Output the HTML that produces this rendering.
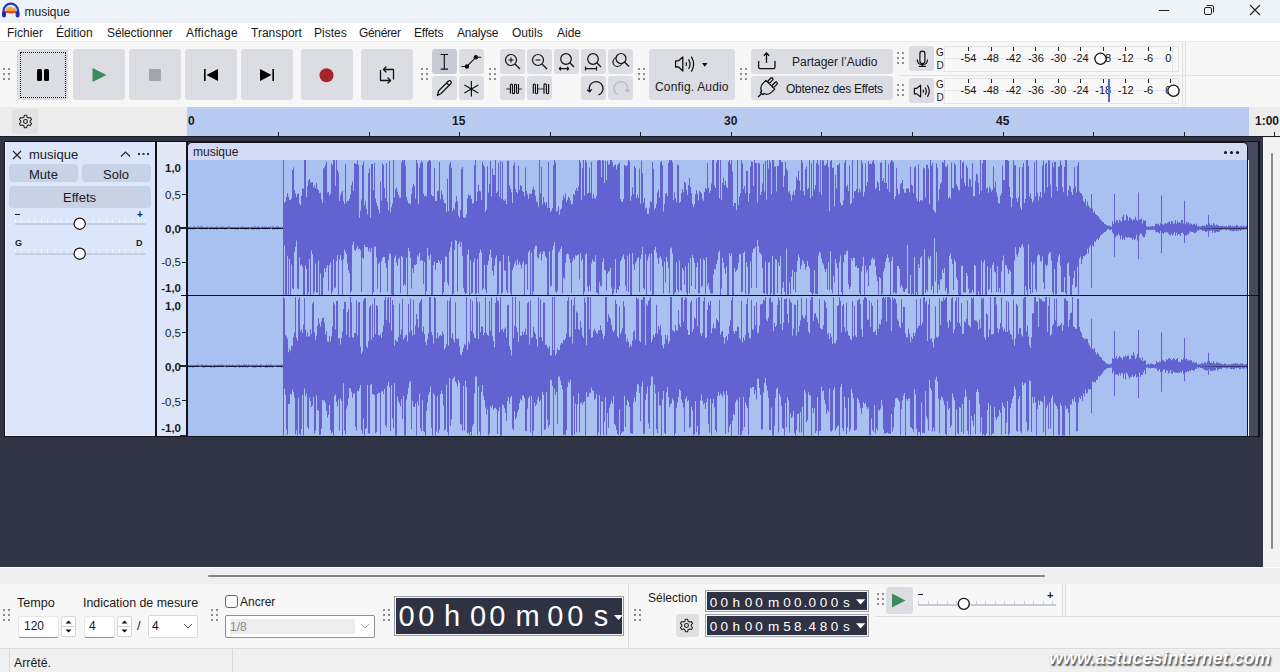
<!DOCTYPE html>
<html><head><meta charset="utf-8">
<style>
*{box-sizing:border-box;margin:0;padding:0}
html,body{width:1280px;height:672px;overflow:hidden;background:#f7f7f8;font-family:"Liberation Sans",sans-serif;font-size:12px;color:#1a1a1a}
.a{position:absolute}
.t{position:absolute;white-space:pre;line-height:1}
.btn{position:absolute;background:#dcdde2;border-radius:3px}
.grip{position:absolute;width:2px;height:2px;background:#8e8e8e;box-shadow:5px 0 #8e8e8e,0 5px #8e8e8e,5px 5px #8e8e8e,0 10px #8e8e8e,5px 10px #8e8e8e}
svg{position:absolute;overflow:visible}
</style></head><body>
<!-- title bar -->
<div class="a" style="left:0;top:0;width:1280px;height:23px;background:linear-gradient(#eef2f9 0 17px,#e9eef5 21px,#eceff4 23px)"></div>
<svg style="left:1px;top:2px" width="20" height="17" viewBox="0 0 20 17">
 <path d="M5 9.5L6 6.5L7 11L8 5L9 12L10 4.5L11 12L12 5.5L13 11L14 7L15 10" fill="none" stroke="#f2a83a" stroke-width="1.6"/>
 <path d="M4.5 10H15.5" stroke="#e8302a" stroke-width="1.6"/>
 <path d="M2.6 11.5V8.8A7.2 7.2 0 0 1 17 8.8V11.5" fill="none" stroke="#2238c8" stroke-width="2.2"/>
 <rect x="1" y="9" width="4" height="6.5" rx="2" fill="#1d2db8"/><rect x="14.6" y="9" width="4" height="6.5" rx="2" fill="#1d2db8"/>
</svg>
<div class="t" style="left:24.5px;top:6px;font-size:12px">musique</div>
<svg style="left:1158px;top:5px" width="12" height="12"><path d="M1 5.5H11" stroke="#222" stroke-width="1"/></svg>
<svg style="left:1203px;top:4px" width="12" height="12"><rect x="1.5" y="3.5" width="7" height="7" rx="1.5" fill="none" stroke="#222"/><path d="M3.5 1.5H9A1.5 1.5 0 0 1 10.5 3V8.5" fill="none" stroke="#222"/></svg>
<svg style="left:1249px;top:4px" width="12" height="12"><path d="M1 1L11 11M11 1L1 11" stroke="#222" stroke-width="1.1"/></svg>

<!-- menu bar -->
<div class="a" style="left:0;top:23px;width:1280px;height:18px;background:#ffffff"></div>
<div class="t" style="left:7px;top:27px">Fichier</div>
<div class="t" style="left:56px;top:27px">Édition</div>
<div class="t" style="left:107px;top:27px;letter-spacing:-0.1px">Sélectionner</div>
<div class="t" style="left:186px;top:27px;letter-spacing:0.22px">Affichage</div>
<div class="t" style="left:251px;top:27px">Transport</div>
<div class="t" style="left:314px;top:27px">Pistes</div>
<div class="t" style="left:359px;top:27px;letter-spacing:-0.35px">Générer</div>
<div class="t" style="left:414px;top:27px;letter-spacing:-0.2px">Effets</div>
<div class="t" style="left:457px;top:27px;letter-spacing:-0.2px">Analyse</div>
<div class="t" style="left:512px;top:27px">Outils</div>
<div class="t" style="left:557px;top:27px">Aide</div>

<!-- toolbar -->
<div class="a" style="left:0;top:41px;width:1280px;height:66px;background:#f7f7f8;border-top:1px solid #ebebeb"></div>
<div class="grip" style="left:3px;top:68px"></div>
<div class="btn" style="left:17px;top:49px;width:51px;height:51px"></div>
<div class="a" style="left:20px;top:52px;width:46px;height:46px;border:1px dotted #111"></div>
<svg style="left:37px;top:69px" width="12" height="12"><rect x="0" y="0" width="5" height="12" rx="1.5" fill="#000"/><rect x="7" y="0" width="5" height="12" rx="1.5" fill="#000"/></svg>
<div class="btn" style="left:73px;top:49px;width:52px;height:51px"></div>
<svg style="left:92px;top:68px" width="15" height="14"><path d="M0.5 0L14.5 7L0.5 14Z" fill="#3e8a60"/></svg>
<div class="btn" style="left:129px;top:49px;width:52px;height:51px"></div>
<div class="a" style="left:149px;top:69px;width:12px;height:12px;background:#a2a4ae;border-radius:1px"></div>
<div class="btn" style="left:185px;top:49px;width:52px;height:51px"></div>
<svg style="left:203px;top:68px" width="16" height="14"><rect x="1" y="1" width="1.6" height="12" fill="#000"/><path d="M15 1V13L3.5 7Z" fill="#000"/></svg>
<div class="btn" style="left:241px;top:49px;width:52px;height:51px"></div>
<svg style="left:259px;top:68px" width="16" height="14"><rect x="13.4" y="1" width="1.6" height="12" fill="#000"/><path d="M1 1V13L12.5 7Z" fill="#000"/></svg>
<div class="btn" style="left:301px;top:49px;width:52px;height:51px"></div>
<svg style="left:319px;top:68px" width="15" height="15"><circle cx="7.5" cy="7.2" r="7" fill="#a3262a"/></svg>
<div class="btn" style="left:361px;top:49px;width:52px;height:51px"></div>
<svg style="left:370px;top:60px" width="30" height="30"><path d="M383.5 69.5H393.5V79.5M380.5 70V80.5H390.5" transform="translate(-370,-60)" fill="none" stroke="#111" stroke-width="1.3" stroke-linejoin="round"/><path d="M386 67L383.5 69.5L386 72M388 78L390.5 80.5L388 83" transform="translate(-370,-60)" fill="none" stroke="#111" stroke-width="1.3" stroke-linecap="round" stroke-linejoin="round"/></svg>

<div class="grip" style="left:421px;top:68px"></div>
<!-- tools -->
<div class="btn" style="left:432px;top:49px;width:25px;height:25px;background:#c8cad6"></div>
<svg style="left:0;top:0" width="1" height="1"><path d="M440.6 54.5H448M444.3 54.5V69.1M440.6 69.1H448" stroke="#111" stroke-width="1.15" fill="none"/></svg>
<div class="btn" style="left:459px;top:49px;width:25px;height:25px"></div>
<svg style="left:0;top:0" width="1" height="1"><path d="M461.5 66.5H466.9L475.9 57.2H481.2" stroke="#111" stroke-width="1.15" fill="none"/><circle cx="466.9" cy="66.5" r="2.2" fill="#111"/><circle cx="475.9" cy="57.2" r="2.2" fill="#111"/></svg>
<div class="btn" style="left:432px;top:76px;width:25px;height:24px"></div>
<svg style="left:432px;top:76px" width="25" height="24"><path d="M5.5 19.5L6.5 15L16.5 5A1.8 1.8 0 0 1 19 7.5L9 17.5Z M14.5 7L17 9.5" stroke="#111" stroke-width="1.2" fill="none" stroke-linejoin="round"/></svg>
<div class="btn" style="left:459px;top:76px;width:25px;height:24px"></div>
<svg style="left:0;top:0" width="1" height="1"><path d="M471.4 81V96.5M464.4 85.1L478.3 92.9M478.3 85.1L464.4 92.9" stroke="#111" stroke-width="1.2"/></svg>

<div class="grip" style="left:489px;top:68px"></div>
<div class="btn" style="left:500px;top:49px;width:25px;height:25px"></div>
<svg style="left:500px;top:49px" width="25" height="25"><circle cx="11" cy="11" r="5.5" fill="none" stroke="#111" stroke-width="1.2"/><path d="M15 15L20 20" stroke="#111" stroke-width="1.3"/><path d="M8.5 11H13.5M11 8.5V13.5" stroke="#111" stroke-width="1.1"/></svg>
<div class="btn" style="left:527px;top:49px;width:25px;height:25px"></div>
<svg style="left:527px;top:49px" width="25" height="25"><circle cx="11" cy="11" r="5.5" fill="none" stroke="#111" stroke-width="1.2"/><path d="M15 15L20 20" stroke="#111" stroke-width="1.3"/><path d="M8.5 11H13.5" stroke="#111" stroke-width="1.1"/></svg>
<div class="btn" style="left:554px;top:49px;width:25px;height:25px"></div>
<svg style="left:554px;top:49px" width="25" height="25"><circle cx="12" cy="10" r="5.3" fill="none" stroke="#111" stroke-width="1.2"/><path d="M15.8 13.8L20 18" stroke="#111" stroke-width="1.3"/><path d="M5 19.6H15M5 19.6L7 17.9M5 19.6L7 21.3M15 19.6L13 17.9M15 19.6L13 21.3" stroke="#111" stroke-width="1.2" fill="none"/></svg>
<div class="btn" style="left:581px;top:49px;width:25px;height:25px"></div>
<svg style="left:581px;top:49px" width="25" height="25"><circle cx="12" cy="10" r="5.3" fill="none" stroke="#111" stroke-width="1.2"/><path d="M15.8 13.8L20 18" stroke="#111" stroke-width="1.3"/><path d="M4.5 19.6H15.5M4.5 17.6V21.6M15.5 17.6V21.6" stroke="#111" stroke-width="1.2" fill="none"/></svg>
<div class="btn" style="left:608px;top:49px;width:25px;height:25px"></div>
<svg style="left:608px;top:49px" width="25" height="25"><circle cx="9.5" cy="13" r="4.5" fill="none" stroke="#111" stroke-width="1.2"/><circle cx="13" cy="9.5" r="5" fill="#dcdde2" stroke="#111" stroke-width="1.2"/><path d="M16.5 13L21 17.5" stroke="#111" stroke-width="1.3"/></svg>

<div class="btn" style="left:500px;top:76px;width:25px;height:24px"></div>
<svg style="left:0;top:0" width="1" height="1"><path d="M506.2 89H510.4M518.5 89H521.8" stroke="#666" stroke-width="1.3"/><path d="M510.4 93.7V85.1A1.02 1.02 0 0 1 512.45 85.1V92.7A1.02 1.02 0 0 0 514.5 92.7V85.1A1.02 1.02 0 0 1 516.5 85.1V92.7A1.02 1.02 0 0 0 518.5 92.7V84" fill="none" stroke="#111" stroke-width="1.15"/></svg>
<div class="btn" style="left:527px;top:76px;width:25px;height:24px"></div>
<svg style="left:0;top:0" width="1" height="1"><path d="M537.6 88.9H544" stroke="#666" stroke-width="1.3"/><path d="M533.3 93.7V85.1A1.05 1.05 0 0 1 535.4 85.1V92.7A1.1 1.1 0 0 0 537.6 92.7V84M544 93.7V85.1A1.2 1.2 0 0 1 546.4 85.1V92.7A1.1 1.1 0 0 0 548.6 92.7V84" fill="none" stroke="#111" stroke-width="1.15"/></svg>
<div class="btn" style="left:581px;top:76px;width:25px;height:24px"></div>
<svg style="left:0;top:0" width="1" height="1"><path d="M598.4 95A6.9 6.9 0 1 0 589.6 90.8" fill="none" stroke="#111" stroke-width="1.3"/><path d="M587.2 89.7L589.6 91.7L591.7 89.4" fill="none" stroke="#111" stroke-width="1.3" stroke-linejoin="round"/></svg>
<div class="btn" style="left:608px;top:76px;width:25px;height:24px"></div>
<svg style="left:0;top:0" width="1" height="1"><path d="M618.5 95A6.9 6.9 0 1 1 627.3 90.8" fill="none" stroke="#b9bac2" stroke-width="1.3"/><path d="M629.7 89.7L627.3 91.7L625.2 89.4" fill="none" stroke="#b9bac2" stroke-width="1.3" stroke-linejoin="round"/></svg>

<div class="grip" style="left:638px;top:68px"></div>
<div class="btn" style="left:649px;top:49px;width:86px;height:51px"></div>
<svg style="left:0;top:0" width="1" height="1"><path d="M675.6 60.8H678.5L682.8 57V71L678.5 67H675.6Z" fill="none" stroke="#111" stroke-width="1.3" stroke-linejoin="round"/><path d="M685.9 62.3Q687.4 64.2 685.9 66.1M688.5 59.3Q691.6 64.2 688.5 69M691.3 56.6Q696 64.2 691.3 71.6" fill="none" stroke="#111" stroke-width="1.3"/><path d="M702 63H707.5L704.75 66.8Z" fill="#111"/></svg>
<div class="t" style="left:655px;top:80.5px;letter-spacing:0.18px">Config. Audio</div>

<div class="grip" style="left:740px;top:68px"></div>
<div class="btn" style="left:751px;top:49px;width:142px;height:25px"></div>
<svg style="left:0;top:0" width="1" height="1"><path d="M766.5 53V63M763.8 55.8L766.5 53L769.2 55.8" fill="none" stroke="#111" stroke-width="1.3"/><path d="M758.6 61V67A1.6 1.6 0 0 0 760.2 68.6H773.4A1.6 1.6 0 0 0 775 67V61" fill="none" stroke="#111" stroke-width="1.3"/></svg>
<div class="t" style="left:792px;top:56px">Partager l’Audio</div>
<div class="btn" style="left:751px;top:76px;width:142px;height:24px"></div>
<svg style="left:0;top:0" width="1" height="1"><g transform="translate(766.8 88.3) rotate(45) scale(1.12)" fill="none" stroke="#111" stroke-width="1.15" stroke-linejoin="round"><path d="M-5.5 -4.5H5.5V-1Q5.5 4 1.5 5V6.5H-1.5V5Q-5.5 4 -5.5 -1Z"/><rect x="-3.9" y="-10" width="2.4" height="5.5" rx="1.2"/><rect x="1.5" y="-10" width="2.4" height="5.5" rx="1.2"/><path d="M0 6.5V11"/></g></svg>
<div class="t" style="left:786px;top:82.5px;letter-spacing:-0.28px">Obtenez des Effets</div>

<div class="grip" style="left:897px;top:52px"></div>
<div class="grip" style="left:897px;top:84px"></div>
<div class="a" style="left:900px;top:75px;width:380px;height:1px;background:#e2e2e2"></div>
<div class="btn" style="left:909px;top:46px;width:25px;height:25px"></div>
<svg style="left:0;top:0" width="1" height="1"><rect x="919.9" y="51.2" width="5" height="12.4" rx="2.5" fill="none" stroke="#111" stroke-width="1.2"/><path d="M917.3 59.5Q917.3 64.6 922.4 64.6T927.5 59.5M922.4 64.6V66.3M918.9 66.4H925.9" fill="none" stroke="#111" stroke-width="1.2"/></svg>
<div class="btn" style="left:909px;top:78px;width:25px;height:25px"></div>
<svg style="left:0;top:0" width="1" height="1"><path d="M914.4 88.3H916.8L920.6 85.2V97L916.8 93.9H914.4Z" fill="none" stroke="#111" stroke-width="1.2" stroke-linejoin="round"/><path d="M922.9 89.6Q924.1 91.1 922.9 92.6M925.1 87.5Q927.6 91.1 925.1 94.7M927.4 85.3Q931.1 91.1 927.4 96.9" fill="none" stroke="#111" stroke-width="1.2"/></svg>
<div class="t" style="left:936px;top:47.5px;font-size:10px">G</div>
<div class="t" style="left:936.5px;top:61px;font-size:10px">D</div>
<div class="a" style="left:944px;top:46px;width:229px;height:26px;border:1px solid #e3e3e3;background:#f8f8f8"></div>
<div class="a" style="left:1172px;top:46px;width:7px;height:26px;border:1px solid #e3e3e3;border-left:none"></div>
<div class="a" style="left:945px;top:58px;width:227px;height:1px;background:#e6e6e6"></div>
<div class="a" style="left:968.0px;top:47px;width:1px;height:3.5px;background:#222"></div>
<div class="t" style="left:948.5px;width:40px;text-align:center;top:53px;font-size:11px;color:#111">&#8209;54</div>
<div class="a" style="left:990.5px;top:47px;width:1px;height:3.5px;background:#222"></div>
<div class="t" style="left:971.0px;width:40px;text-align:center;top:53px;font-size:11px;color:#111">&#8209;48</div>
<div class="a" style="left:1012.9px;top:47px;width:1px;height:3.5px;background:#222"></div>
<div class="t" style="left:993.4px;width:40px;text-align:center;top:53px;font-size:11px;color:#111">&#8209;42</div>
<div class="a" style="left:1035.4px;top:47px;width:1px;height:3.5px;background:#222"></div>
<div class="t" style="left:1015.9px;width:40px;text-align:center;top:53px;font-size:11px;color:#111">&#8209;36</div>
<div class="a" style="left:1057.9px;top:47px;width:1px;height:3.5px;background:#222"></div>
<div class="t" style="left:1038.4px;width:40px;text-align:center;top:53px;font-size:11px;color:#111">&#8209;30</div>
<div class="a" style="left:1080.3px;top:47px;width:1px;height:3.5px;background:#222"></div>
<div class="t" style="left:1060.8px;width:40px;text-align:center;top:53px;font-size:11px;color:#111">&#8209;24</div>
<div class="a" style="left:1102.8px;top:47px;width:1px;height:3.5px;background:#222"></div>
<div class="t" style="left:1083.3px;width:40px;text-align:center;top:53px;font-size:11px;color:#111">&#8209;18</div>
<div class="a" style="left:1125.3px;top:47px;width:1px;height:3.5px;background:#222"></div>
<div class="t" style="left:1105.8px;width:40px;text-align:center;top:53px;font-size:11px;color:#111">&#8209;12</div>
<div class="a" style="left:1147.8px;top:47px;width:1px;height:3.5px;background:#222"></div>
<div class="t" style="left:1128.3px;width:40px;text-align:center;top:53px;font-size:11px;color:#111">&#8209;6</div>
<div class="a" style="left:1170.2px;top:47px;width:1px;height:3.5px;background:#222"></div>
<div class="t" style="left:1148.3px;width:40px;text-align:center;top:53px;font-size:11px;color:#111">0</div>
<div class="t" style="left:936px;top:79.5px;font-size:10px">G</div>
<div class="t" style="left:936.5px;top:93px;font-size:10px">D</div>
<div class="a" style="left:944px;top:78px;width:229px;height:26px;border:1px solid #e3e3e3;background:#f8f8f8"></div>
<div class="a" style="left:1172px;top:78px;width:7px;height:26px;border:1px solid #e3e3e3;border-left:none"></div>
<div class="a" style="left:945px;top:90px;width:227px;height:1px;background:#e6e6e6"></div>
<div class="a" style="left:968.0px;top:79px;width:1px;height:3.5px;background:#222"></div>
<div class="t" style="left:948.5px;width:40px;text-align:center;top:85px;font-size:11px;color:#111">&#8209;54</div>
<div class="a" style="left:990.5px;top:79px;width:1px;height:3.5px;background:#222"></div>
<div class="t" style="left:971.0px;width:40px;text-align:center;top:85px;font-size:11px;color:#111">&#8209;48</div>
<div class="a" style="left:1012.9px;top:79px;width:1px;height:3.5px;background:#222"></div>
<div class="t" style="left:993.4px;width:40px;text-align:center;top:85px;font-size:11px;color:#111">&#8209;42</div>
<div class="a" style="left:1035.4px;top:79px;width:1px;height:3.5px;background:#222"></div>
<div class="t" style="left:1015.9px;width:40px;text-align:center;top:85px;font-size:11px;color:#111">&#8209;36</div>
<div class="a" style="left:1057.9px;top:79px;width:1px;height:3.5px;background:#222"></div>
<div class="t" style="left:1038.4px;width:40px;text-align:center;top:85px;font-size:11px;color:#111">&#8209;30</div>
<div class="a" style="left:1080.3px;top:79px;width:1px;height:3.5px;background:#222"></div>
<div class="t" style="left:1060.8px;width:40px;text-align:center;top:85px;font-size:11px;color:#111">&#8209;24</div>
<div class="a" style="left:1102.8px;top:79px;width:1px;height:3.5px;background:#222"></div>
<div class="t" style="left:1083.3px;width:40px;text-align:center;top:85px;font-size:11px;color:#111">&#8209;18</div>
<div class="a" style="left:1125.3px;top:79px;width:1px;height:3.5px;background:#222"></div>
<div class="t" style="left:1105.8px;width:40px;text-align:center;top:85px;font-size:11px;color:#111">&#8209;12</div>
<div class="a" style="left:1147.8px;top:79px;width:1px;height:3.5px;background:#222"></div>
<div class="t" style="left:1128.3px;width:40px;text-align:center;top:85px;font-size:11px;color:#111">&#8209;6</div>
<div class="a" style="left:1170.2px;top:79px;width:1px;height:3.5px;background:#222"></div>
<div class="t" style="left:1148.3px;width:40px;text-align:center;top:85px;font-size:11px;color:#111">0</div>
<svg style="left:1094px;top:52px" width="14" height="14"><circle cx="6.5" cy="6.8" r="5.6" fill="#fff" stroke="#111" stroke-width="1.3"/></svg>
<div class="a" style="left:1108px;top:79px;width:2px;height:23px;background:#5a68cf"></div>
<svg style="left:1167px;top:84px" width="14" height="14"><circle cx="6.5" cy="6.8" r="5.6" fill="#fff" stroke="#111" stroke-width="1.3"/></svg>
<div class="a" style="left:1182px;top:42px;width:1px;height:65px;background:#e0e0e0"></div>
<div class="a" style="left:1185px;top:42px;width:1px;height:65px;background:#e0e0e0"></div>


<!-- timeline -->
<div class="a" style="left:0;top:107px;width:1280px;height:29px;background:#ececec"></div>
<div class="a" style="left:187px;top:107px;width:1062px;height:29px;background:#b9cbf1"></div>
<div class="btn" style="left:12px;top:109px;width:26px;height:25px;background:#e2e2e5"></div>
<svg style="left:17.5px;top:113.5px" width="15" height="15" viewBox="0 0 17 17"><path d="M7.2 1.5H9.8L10.3 3.6L12 4.6L14.1 4L15.4 6.2L13.8 7.7V9.3L15.4 10.8L14.1 13L12 12.4L10.3 13.4L9.8 15.5H7.2L6.7 13.4L5 12.4L2.9 13L1.6 10.8L3.2 9.3V7.7L1.6 6.2L2.9 4L5 4.6L6.7 3.6Z" fill="none" stroke="#222" stroke-width="1.2" stroke-linejoin="round"/><circle cx="8.5" cy="8.5" r="2.2" fill="none" stroke="#222" stroke-width="1.2"/></svg>
<div class="t" style="left:188px;top:115px;font-weight:700;color:#1a1a1a">0</div>
<div class="t" style="left:452px;top:115px;font-weight:700;color:#1a1a1a">15</div>
<div class="t" style="left:724px;top:115px;font-weight:700;color:#1a1a1a">30</div>
<div class="t" style="left:996px;top:115px;font-weight:700;color:#1a1a1a">45</div>
<div class="t" style="left:1255px;top:115px;font-weight:700;color:#1a1a1a">1:00</div>
<div class="a" style="left:277.9px;top:132px;width:1px;height:4px;background:#222"></div>
<div class="a" style="left:368.5px;top:132px;width:1px;height:4px;background:#222"></div>
<div class="a" style="left:459.0px;top:132px;width:1px;height:4px;background:#222"></div>
<div class="a" style="left:549.6px;top:132px;width:1px;height:4px;background:#222"></div>
<div class="a" style="left:640.2px;top:132px;width:1px;height:4px;background:#222"></div>
<div class="a" style="left:730.8px;top:132px;width:1px;height:4px;background:#222"></div>
<div class="a" style="left:821.4px;top:132px;width:1px;height:4px;background:#222"></div>
<div class="a" style="left:911.9px;top:132px;width:1px;height:4px;background:#222"></div>
<div class="a" style="left:1002.5px;top:132px;width:1px;height:4px;background:#222"></div>
<div class="a" style="left:1093.1px;top:132px;width:1px;height:4px;background:#222"></div>
<div class="a" style="left:1183.7px;top:132px;width:1px;height:4px;background:#222"></div>
<div class="a" style="left:1274.3px;top:132px;width:1px;height:4px;background:#222"></div>


<!-- track area -->
<div class="a" style="left:0;top:136px;width:1263px;height:431px;background:#313444"></div>
<div class="a" style="left:0;top:136px;width:1280px;height:1px;background:#1a1a22"></div>
<div class="a" style="left:4px;top:141px;width:1256px;height:296px;background:#111318"></div>
<div class="a" style="left:5px;top:142px;width:150px;height:294px;background:#dce6fa;box-shadow:inset 1px -1px 0 #f2f6ff"></div>
<div class="a" style="left:157px;top:142px;width:29px;height:294px;background:#dde6f8"></div><div class="a" style="left:157px;top:142px;width:29px;height:18px;background:#e3e8f6"></div>
<div class="a" style="left:188px;top:142px;width:1070px;height:294px;background:#454a5e"></div>
<div class="a" style="left:187px;top:142.4px;width:1061px;height:17.6px;background:#d3daf3;border:1px solid #15161c;border-bottom:none;border-radius:5px 5px 0 0"></div>
<div class="a" style="left:188px;top:160px;width:1059px;height:276px;background:#a9c1f1"></div>
<div class="a" style="left:1247px;top:160px;width:1px;height:276px;background:#15161c"></div><div class="a" style="left:1248px;top:160px;width:1px;height:276px;background:#f4f6ff"></div>
<div class="t" style="left:193px;top:145.7px;font-size:12px;color:#1a1a1a">musique</div>
<div class="a" style="left:1224px;top:151px;width:3px;height:3px;border-radius:50%;background:#111;box-shadow:6px 0 0 #111,12px 0 0 #111"></div>

<svg style="left:0;top:0" width="1280" height="672"><path d="M188 227V227h1V226.4h1V227h1V227h1V227h1V226.4h1V226.4h1V227h1V227h1V226.4h1V226.4h1V227h1V226.4h1V226.4h1V226.4h1V227h1V227h1V227h1V227h1V226.4h1V227h1V227h1V227h1V226.4h1V227h1V227h1V227h1V227h1V226.4h1V226.4h1V227h1V227h1V227h1V226.4h1V227h1V226.4h1V227h1V227h1V227h1V227h1V226.4h1V226.4h1V227h1V227h1V227h1V227h1V227h1V227h1V227h1V227h1V227h1V227h1V227h1V226.4h1V226.4h1V227h1V227h1V227h1V227h1V227h1V227h1V227h1V227h1V227h1V226.4h1V227h1V226.4h1V226.4h1V227h1V226.4h1V226.4h1V227h1V227h1V227h1V226.4h1V227h1V226.4h1V227h1V226.4h1V227h1V227h1V227h1V226.4h1V227h1V226.4h1V226.4h1V227h1V227h1V226.4h1V226.4h1V226.4h1V227h1V227h1V227h1V227h1V160h1V202.9h1V201.6h1V196.8h1V193.1h1V196.7h1V199.8h1V199.9h1V198.4h1V170.1h1V167.4h1V190.3h1V193.4h1V197h1V193.9h1V193.5h1V203.5h1V205.1h1V195.8h1V188.3h1V188.7h1V160h1V160h1V197.2h1V186.2h1V180.2h1V179.1h1V182.4h1V182.2h1V182h1V187.4h1V185.3h1V188.3h1V182.9h1V189.1h1V190.1h1V193.1h1V192.7h1V199.3h1V203.1h1V168.4h1V167.5h1V164.8h1V161.7h1V192.6h1V191.7h1V195.7h1V193.9h1V163.6h1V165.2h1V160h1V160.2h1V186.1h1V160h1V170.1h1V172.6h1V201h1V195.5h1V192.6h1V190.9h1V200.8h1V204.1h1V164.2h1V202.8h1V200.8h1V201.1h1V198.8h1V194.5h1V185.1h1V181.5h1V190.8h1V163.3h1V163.7h1V163.9h1V160.4h1V164.8h1V217.8h1V210.5h1V199.6h1V164.9h1V161.8h1V205.2h1V200.7h1V208.8h1V214.2h1V173.1h1V168.6h1V217.8h1V164.1h1V164.1h1V190.3h1V163h1V198.6h1V202.7h1V206h1V209.4h1V213.2h1V181.5h1V200.6h1V163.3h1V165h1V187.7h1V198.2h1V162.9h1V201.7h1V210.2h1V160.8h1V212.2h1V207.3h1V203.4h1V160h1V197.5h1V189.3h1V187.6h1V191.8h1V195.1h1V197.6h1V197.7h1V162.5h1V160h1V160.4h1V160h1V165.5h1V197.1h1V200.4h1V203.5h1V203.3h1V204.5h1V194.1h1V187.6h1V184.1h1V185.9h1V198.6h1V160h1V162.9h1V204.2h1V167.8h1V162.9h1V160.8h1V162.6h1V193.6h1V196.6h1V195.4h1V196.6h1V162.3h1V161.1h1V160h1V160.8h1V194.5h1V196h1V196.5h1V168.2h1V200.8h1V201.3h1V191.3h1V190.6h1V162h1V199.2h1V190.4h1V194.8h1V199.7h1V203.1h1V203.6h1V212.1h1V178.8h1V210.9h1V164.2h1V161.9h1V168.1h1V211.3h1V208.2h1V209.7h1V202.4h1V196.2h1V201.3h1V215.6h1V217.6h1V209.9h1V168.7h1V166.9h1V217.3h1V217.8h1V217.8h1V214.6h1V198.2h1V194.5h1V195.6h1V195.5h1V199.1h1V203.7h1V203h1V165.3h1V160h1V200.9h1V191.7h1V184.7h1V190.9h1V191.4h1V200.3h1V161.9h1V165.1h1V167.1h1V212h1V209.7h1V166.2h1V192.6h1V184.3h1V160.7h1V196.2h1V168.5h1V175.1h1V175.3h1V160h1V193.1h1V191.5h1V162.8h1V196.7h1V161.1h1V198.9h1V162.1h1V200.2h1V200.8h1V199.3h1V204.1h1V161.1h1V160.6h1V185.4h1V188.4h1V192.3h1V203.1h1V165.6h1V162.6h1V189.1h1V192h1V193.5h1V165.7h1V189.9h1V185.2h1V186h1V191.1h1V192.1h1V196.6h1V167.5h1V191h1V194.6h1V199.1h1V193.4h1V193.9h1V193.8h1V189.6h1V186.9h1V190h1V195.7h1V201.4h1V202.2h1V206.8h1V160h1V193.4h1V167h1V204.3h1V197.1h1V202.1h1V204.4h1V201.9h1V207.9h1V161.8h1V208h1V212.1h1V210.5h1V208h1V164.9h1V160h1V162.4h1V211.5h1V210.7h1V206.5h1V214.7h1V209.7h1V208.5h1V200.3h1V195.6h1V197.9h1V193.1h1V202.3h1V199.8h1V196.5h1V198h1V200.4h1V204.8h1V203.7h1V194.1h1V194.9h1V190.5h1V188.1h1V191h1V186.4h1V160h1V162.5h1V200.1h1V168.2h1V160h1V195.4h1V160h1V162.3h1V193.8h1V192.7h1V167.6h1V193.1h1V161.9h1V198.4h1V194.1h1V198h1V198.9h1V195.7h1V160.7h1V160h1V160h1V160.5h1V177.2h1V160h1V160.6h1V183h1V160.7h1V180.2h1V160.8h1V164.9h1V163.8h1V160h1V160h1V162.1h1V167h1V164.9h1V164.5h1V169.6h1V165.2h1V163.7h1V162.4h1V198.9h1V201.3h1V202h1V199.2h1V165h1V165.6h1V166.5h1V164.9h1V160h1V161.5h1V200.7h1V196h1V187.3h1V194.1h1V166.1h1V168.1h1V198.2h1V194.8h1V197.8h1V168.5h1V203.7h1V160.4h1V173.3h1V202.8h1V198.1h1V208.5h1V207.8h1V214h1V213.7h1V207.6h1V200.9h1V202.5h1V162.1h1V168.8h1V209.5h1V207.9h1V203.7h1V192.4h1V189.7h1V197.8h1V162.6h1V161.3h1V165.3h1V211.5h1V203.7h1V193.5h1V192.9h1V196.3h1V163.1h1V160h1V160.5h1V160h1V162.6h1V200.1h1V192.3h1V198h1V202.3h1V164.4h1V165.4h1V203.1h1V201.8h1V193.3h1V188.9h1V192.2h1V181.6h1V182.8h1V189.9h1V194.9h1V185h1V177.9h1V186.8h1V192.9h1V203.8h1V207.2h1V204.3h1V194.3h1V190.2h1V194h1V200.2h1V190.7h1V192.1h1V193.5h1V198.4h1V200.8h1V191.9h1V188.1h1V189.2h1V163h1V187.8h1V192.8h1V190.7h1V183.5h1V160h1V160h1V185.6h1V187.9h1V162.5h1V160h1V160h1V198.3h1V160h1V199.7h1V183h1V177.7h1V185h1V180.8h1V187.1h1V188.2h1V161.7h1V160h1V164h1V160h1V171.4h1V206.1h1V203.1h1V203.1h1V210.2h1V160h1V205.1h1V196.6h1V193.1h1V160h1V163.4h1V189h1V186.1h1V193.1h1V170.7h1V170.9h1V201.4h1V193.5h1V166.6h1V161h1V161.9h1V186.1h1V160h1V162.9h1V163h1V202.5h1V162.6h1V163.7h1V195.1h1V192.1h1V183.4h1V163.7h1V191.6h1V160.9h1V199.7h1V160h1V168.5h1V160h1V162.5h1V194.3h1V160h1V160h1V166.4h1V166.6h1V191.5h1V165.7h1V166.1h1V160h1V160.3h1V161.9h1V162h1V186.9h1V175.7h1V162.1h1V168.5h1V170.7h1V192.6h1V191h1V194.5h1V200.5h1V195h1V191.4h1V194.9h1V189.5h1V176.8h1V179.7h1V170.7h1V181h1V190.2h1V160h1V162.5h1V191.1h1V195.3h1V169.2h1V166.3h1V189.6h1V188h1V160.2h1V198.3h1V163.3h1V196h1V160h1V189.7h1V185.1h1V163.1h1V160h1V164.4h1V192.1h1V160.3h1V194.7h1V160h1V160.6h1V165.5h1V165.5h1V163.8h1V160h1V167h1V211.3h1V161.3h1V160h1V168.1h1V167.4h1V206.5h1V174.9h1V188.5h1V165.1h1V165.2h1V163.2h1V202.7h1V205.2h1V205h1V200.4h1V162.7h1V160h1V186.7h1V184.8h1V191.1h1V165.6h1V204.2h1V203h1V160h1V198.4h1V191.1h1V191.3h1V188.9h1V160h1V192.5h1V188.4h1V191.4h1V160.3h1V163.2h1V196.5h1V192.3h1V163.3h1V185.4h1V182.1h1V160.9h1V164h1V163.6h1V164.3h1V161.4h1V160h1V163.7h1V189.3h1V187.5h1V181h1V183.1h1V191.1h1V162.9h1V161.9h1V180.9h1V178.3h1V183h1V160h1V183h1V189h1V164h1V192.1h1V162.3h1V160h1V161h1V162.4h1V199.3h1V196.2h1V167.8h1V188.7h1V194.4h1V193.8h1V184.2h1V183h1V179.9h1V189h1V192.5h1V193.1h1V188.6h1V188.3h1V188.8h1V192.2h1V166.7h1V184.7h1V185.7h1V192.9h1V167.5h1V166.3h1V198.4h1V201.1h1V164.3h1V202.1h1V200.1h1V200.3h1V200.4h1V167.4h1V168.4h1V197.6h1V165h1V164.6h1V168.5h1V203.9h1V160h1V165.9h1V162.9h1V209.8h1V211.3h1V213.1h1V163.6h1V167.5h1V200.6h1V189.2h1V183.8h1V182.2h1V162h1V162.7h1V160h1V166.3h1V167.3h1V164.7h1V198.5h1V196.8h1V198.7h1V162.5h1V187.8h1V188h1V162.9h1V165.1h1V184.6h1V186.6h1V189.7h1V190.6h1V160h1V178.4h1V162.7h1V161.8h1V182.7h1V186h1V165.4h1V167.8h1V186.8h1V178.5h1V179.5h1V186.4h1V163.3h1V196.4h1V196.1h1V180.7h1V173.4h1V174.8h1V183.2h1V194.3h1V160h1V191.1h1V163.2h1V160h1V160h1V160h1V188.5h1V187.5h1V192.8h1V186.7h1V188.4h1V191.7h1V189.9h1V166.4h1V187.5h1V181.4h1V192.4h1V196.6h1V203.1h1V203.8h1V195.7h1V193.3h1V165.6h1V180.1h1V180.3h1V160h1V160h1V160h1V161.1h1V186.7h1V196.9h1V207.2h1V198.2h1V160.2h1V165.2h1V165.3h1V198.2h1V202.1h1V197.3h1V167.2h1V207.6h1V210h1V167.1h1V163.1h1V203h1V198.9h1V160h1V160h1V166.2h1V196.8h1V193.4h1V199.1h1V202.4h1V200.5h1V162.2h1V196.6h1V160.1h1V192.4h1V200.4h1V196.2h1V192.1h1V197.7h1V165.4h1V160.7h1V192.7h1V163.9h1V162.8h1V187.3h1V160.2h1V160.6h1V184.6h1V197.4h1V162.6h1V167.2h1V161.7h1V162h1V186.7h1V190.9h1V166.6h1V166.6h1V160.6h1V164.7h1V186.9h1V192.3h1V166.9h1V160h1V160.3h1V195.8h1V190.2h1V185.4h1V186.7h1V192.1h1V195h1V188.5h1V167.2h1V186.3h1V192.5h1V165.5h1V162.3h1V191.5h1V193h1V193.4h1V195.7h1V201h1V202.5h1V199.1h1V205.7h1V201.6h1V205.5h1V207.5h1V208.3h1V194h1V208.6h1V212.7h1V211.3h1V214h1V215.1h1V215.7h1V216.4h1V218.4h1V219.5h1V220.6h1V222.1h1V221.9h1V224h1V224.2h1V224.9h1V225.9h1V225.5h1V225.7h1V226.2h1V226.8h1V221.3h1V223.9h1V194h1V222h1V220h1V220.2h1V222.8h1V219.8h1V220.6h1V221.7h1V216.8h1V214.8h1V220.4h1V220h1V214.3h1V216.2h1V220.6h1V217.6h1V217.7h1V218.9h1V220.8h1V219.2h1V219.8h1V216.8h1V219.6h1V221h1V192.6h1V219.4h1V219.6h1V218.4h1V223.4h1V220.3h1V220.7h1V220.4h1V226.6h1V226.7h1V226.4h1V226.8h1V226.3h1V226.6h1V226.1h1V226.2h1V226.2h1V223.4h1V224h1V224.3h1V223.5h1V225.4h1V223.2h1V195.4h1V223.9h1V224.7h1V223.4h1V222.9h1V224h1V222.7h1V222.3h1V221.4h1V223.7h1V220.9h1V221.3h1V223.8h1V223.5h1V220h1V223.7h1V220.7h1V223h1V221.9h1V223.3h1V220h1V220.1h1V223.5h1V200.8h1V224.3h1V221.6h1V222.9h1V221.9h1V224.4h1V222.9h1V224.1h1V225h1V223.7h1V224h1V225h1V223.4h1V226.6h1V225.7h1V226.6h1V226.6h1V226.1h1V225.5h1V225.9h1V225.6h1V225.9h1V223.7h1V225h1V215.1h1V223.6h1V224.9h1V224.7h1V225.4h1V223h1V224.6h1V225.7h1V224.4h1V225.1h1V225.4h1V225.9h1V226.1h1V226.1h1V225.8h1V226.6h1V226.2h1V226.2h1V225.8h1V226.9h1V225.5h1V225.7h1V225.3h1V226.6h1V225.8h1V226.5h1V226.3h1V225.9h1V225.1h1V225.5h1V226.5h1V226.4h1V226h1V225.7h1V226.5h1V225.7h1V226.6h1V226.6h1V225.5h1V229.2h-1V229.3h-1V229.4h-1V229.8h-1V229.5h-1V229.7h-1V230.8h-1V229.7h-1V230.8h-1V230.4h-1V231.2h-1V230.2h-1V230.8h-1V231.3h-1V231h-1V230.8h-1V230.6h-1V230.5h-1V229.4h-1V229.2h-1V230.3h-1V229.7h-1V229.3h-1V229.5h-1V229.5h-1V230.1h-1V230h-1V231.4h-1V231.8h-1V232h-1V231.6h-1V232.7h-1V232.5h-1V230.5h-1V232.8h-1V230.3h-1V230.4h-1V231.1h-1V236.8h-1V231.1h-1V232.1h-1V232.1h-1V230.9h-1V230.8h-1V230.9h-1V229.7h-1V229.7h-1V229.6h-1V230.4h-1V230.5h-1V231.8h-1V232.7h-1V232.9h-1V232.4h-1V232.1h-1V232h-1V231.3h-1V232.6h-1V234.4h-1V234.6h-1V235.3h-1V235.4h-1V243h-1V233.8h-1V232.6h-1V232.9h-1V236.1h-1V234h-1V234.1h-1V235.6h-1V232.8h-1V236.1h-1V231.9h-1V234.3h-1V235.5h-1V233.6h-1V235.5h-1V235.1h-1V233.7h-1V232.5h-1V232.1h-1V232.8h-1V232.3h-1V234.3h-1V233h-1V253.2h-1V230.9h-1V233.4h-1V232.5h-1V232.1h-1V232.4h-1V231.4h-1V229.8h-1V229.7h-1V229.8h-1V229.7h-1V229.6h-1V230.2h-1V229.8h-1V229.4h-1V229.7h-1V233.9h-1V237h-1V237.6h-1V235.7h-1V233.4h-1V233.6h-1V235.2h-1V259.3h-1V240.6h-1V234.8h-1V239h-1V240h-1V238.2h-1V240h-1V237.7h-1V238.1h-1V237.4h-1V237.1h-1V238.1h-1V237.3h-1V237h-1V240.3h-1V238.2h-1V239.7h-1V235.5h-1V239.2h-1V235.4h-1V233.4h-1V235.4h-1V235.7h-1V237.5h-1V257.2h-1V233.8h-1V232.5h-1V229.3h-1V230h-1V230.1h-1V229.1h-1V229.5h-1V230.5h-1V231.7h-1V232.1h-1V232.8h-1V233.9h-1V234.8h-1V235.8h-1V237.7h-1V240.1h-1V238.5h-1V239.8h-1V241.9h-1V241.4h-1V246.5h-1V245.5h-1V287.8h-1V245.3h-1V247.3h-1V253.4h-1V248.8h-1V254.1h-1V254.9h-1V256.2h-1V256h-1V259h-1V264h-1V256.4h-1V258.4h-1V295h-1V266.5h-1V286.6h-1V287.8h-1V270.8h-1V278h-1V284.8h-1V294.7h-1V295h-1V276h-1V262.4h-1V263.7h-1V295h-1V293.1h-1V277.3h-1V292h-1V291.9h-1V292.2h-1V265.5h-1V254.1h-1V256.4h-1V262.3h-1V294.3h-1V294.3h-1V269.1h-1V295h-1V292h-1V260.8h-1V252.6h-1V252.5h-1V254.4h-1V264.7h-1V266.5h-1V264.5h-1V289.1h-1V282.2h-1V256.6h-1V261.3h-1V261.2h-1V255.3h-1V254.2h-1V256.3h-1V291.4h-1V289.3h-1V263.2h-1V264.4h-1V292.7h-1V261.8h-1V294.1h-1V288.9h-1V244.4h-1V295h-1V290.2h-1V286.1h-1V295h-1V247.2h-1V244.3h-1V245.7h-1V247.9h-1V246.9h-1V253.1h-1V256.8h-1V254.6h-1V247.2h-1V260.6h-1V293.6h-1V295h-1V294.4h-1V271.6h-1V269.9h-1V273.8h-1V268.5h-1V265.4h-1V264.8h-1V293.3h-1V255.6h-1V260.5h-1V271.4h-1V292.6h-1V288.1h-1V292.3h-1V265.9h-1V292.1h-1V272.5h-1V271.4h-1V262.4h-1V265.1h-1V292.7h-1V268h-1V289h-1V290.4h-1V266.3h-1V295h-1V295h-1V259.9h-1V262.6h-1V295h-1V260.8h-1V295h-1V295h-1V291h-1V295h-1V294.7h-1V266h-1V264.9h-1V293.1h-1V289.9h-1V292.6h-1V292.7h-1V293.4h-1V288.9h-1V275.8h-1V273h-1V292.4h-1V292.5h-1V292.1h-1V265.4h-1V266.1h-1V295h-1V295h-1V294.3h-1V280.2h-1V277.5h-1V262.1h-1V259.4h-1V290h-1V263.9h-1V259h-1V253.5h-1V256h-1V293.3h-1V294.8h-1V287.9h-1V291h-1V268h-1V273.1h-1V269.6h-1V279.2h-1V279.4h-1V290h-1V284.4h-1V293.1h-1V252.2h-1V281.6h-1V238.2h-1V293.5h-1V286h-1V290.1h-1V255.8h-1V259.4h-1V256.4h-1V291.6h-1V289.3h-1V293.1h-1V248.9h-1V295h-1V294.9h-1V256.2h-1V258.1h-1V268.1h-1V264.3h-1V295h-1V291.7h-1V294.9h-1V256.7h-1V295h-1V293.2h-1V294.8h-1V275h-1V293.8h-1V293.4h-1V245h-1V288.2h-1V289.5h-1V291.9h-1V291.5h-1V287.6h-1V285h-1V287.6h-1V268.8h-1V266h-1V266h-1V293.4h-1V293.5h-1V291.7h-1V293.5h-1V256.7h-1V260.7h-1V295h-1V262.6h-1V258h-1V254.6h-1V258h-1V261.8h-1V268.3h-1V271.6h-1V293.4h-1V295h-1V278.6h-1V276.9h-1V295h-1V281h-1V275.7h-1V266.2h-1V258.8h-1V259.7h-1V257.6h-1V259.4h-1V265.2h-1V265.5h-1V285.9h-1V270.1h-1V272.5h-1V265.5h-1V295h-1V256.8h-1V266.2h-1V271.5h-1V295h-1V293.1h-1V268.1h-1V268h-1V265.8h-1V266.8h-1V258.1h-1V257.8h-1V260.8h-1V258.3h-1V287h-1V289.3h-1V284.5h-1V250.6h-1V251.3h-1V254.4h-1V254.8h-1V262.6h-1V295h-1V292.1h-1V255.3h-1V261.7h-1V295h-1V268.3h-1V263.4h-1V258.9h-1V282.5h-1V275.7h-1V293.3h-1V289.7h-1V251.3h-1V290.2h-1V262.5h-1V289.6h-1V268.5h-1V272.3h-1V269.1h-1V264.4h-1V262.7h-1V258.4h-1V253.1h-1V251.7h-1V255.5h-1V293.9h-1V294.1h-1V293.8h-1V270.2h-1V293.2h-1V295h-1V292.8h-1V292h-1V267.8h-1V265.8h-1V260.9h-1V267h-1V269.8h-1V263.9h-1V261.4h-1V260.3h-1V265.6h-1V269.3h-1V257.4h-1V254.4h-1V260.7h-1V271.9h-1V291.9h-1V272.1h-1V289.4h-1V269.7h-1V276.7h-1V293.9h-1V282.4h-1V294.6h-1V294.6h-1V248.4h-1V295h-1V291.6h-1V282h-1V288h-1V294.8h-1V255.7h-1V265.9h-1V262.5h-1V292.9h-1V259.8h-1V259h-1V294.4h-1V295h-1V255.8h-1V292.9h-1V295h-1V262h-1V262.8h-1V295h-1V293.5h-1V261.6h-1V294.1h-1V292.9h-1V268h-1V255.1h-1V253.2h-1V252.5h-1V246.2h-1V240h-1V288.1h-1V246.8h-1V248.3h-1V248.7h-1V252.5h-1V287.9h-1V261.3h-1V293.3h-1V295h-1V266.9h-1V262.2h-1V293.7h-1V251.5h-1V253.1h-1V291.4h-1V292.6h-1V254.4h-1V253.7h-1V262.9h-1V268.9h-1V270.7h-1V271.8h-1V268.1h-1V295h-1V295h-1V253h-1V256.3h-1V253.4h-1V295h-1V295h-1V266.8h-1V273.8h-1V268.5h-1V263h-1V257.7h-1V288.5h-1V295h-1V250.7h-1V252.4h-1V260.2h-1V263.9h-1V269.5h-1V269.1h-1V274.2h-1V293.5h-1V293.6h-1V293.4h-1V289.6h-1V282.9h-1V285.8h-1V257.2h-1V294h-1V260.2h-1V258.6h-1V285.7h-1V287.2h-1V258.5h-1V293.1h-1V293.6h-1V262.5h-1V267.2h-1V289.1h-1V262.4h-1V258h-1V254.9h-1V286.1h-1V257.9h-1V293.6h-1V263h-1V295h-1V292.8h-1V266.4h-1V284.7h-1V270.6h-1V268h-1V291.2h-1V290h-1V260.5h-1V292.2h-1V289.8h-1V262.3h-1V292.2h-1V293.4h-1V295h-1V253.4h-1V247.4h-1V248.5h-1V292.9h-1V267.8h-1V261.6h-1V256.9h-1V282.5h-1V261.8h-1V293.4h-1V266.6h-1V259.1h-1V256.5h-1V257.8h-1V264.1h-1V258.2h-1V252.5h-1V246.7h-1V250h-1V294.5h-1V294.9h-1V253.6h-1V290.7h-1V253.7h-1V256.5h-1V260.4h-1V295h-1V254h-1V289.4h-1V288h-1V246.9h-1V254.7h-1V259h-1V292.1h-1V257.1h-1V257.9h-1V260.7h-1V263.2h-1V269.9h-1V264.6h-1V253.1h-1V295h-1V295h-1V253.7h-1V291.9h-1V256h-1V291.1h-1V285.4h-1V259.2h-1V254.6h-1V256.6h-1V259.6h-1V261.2h-1V286.1h-1V290h-1V289.2h-1V293.1h-1V258.9h-1V288.7h-1V293.3h-1V295h-1V287.6h-1V267.8h-1V270.8h-1V271.7h-1V273.7h-1V290.6h-1V270.4h-1V269.6h-1V258.6h-1V262h-1V286.5h-1V285.6h-1V282.3h-1V295h-1V293.1h-1V292.3h-1V255.3h-1V261.4h-1V261.4h-1V259.3h-1V263.6h-1V291.3h-1V285.6h-1V291.6h-1V286.2h-1V253.3h-1V255h-1V291.7h-1V295h-1V258.7h-1V260.7h-1V253.2h-1V279.4h-1V254.3h-1V255h-1V255.7h-1V255.3h-1V259.6h-1V257.4h-1V261.6h-1V293h-1V262.8h-1V258.7h-1V254.2h-1V253.6h-1V254.6h-1V263.2h-1V279.1h-1V277.5h-1V292.9h-1V246.6h-1V249h-1V250.9h-1V252.6h-1V290.5h-1V292.7h-1V291.4h-1V242.6h-1V245.7h-1V250h-1V285.8h-1V286.3h-1V251.6h-1V295h-1V295h-1V258h-1V256.2h-1V251.4h-1V250.9h-1V254.1h-1V260.5h-1V252.1h-1V254.1h-1V258.8h-1V256.9h-1V245.7h-1V245.8h-1V248.7h-1V291.2h-1V295h-1V252.4h-1V295h-1V250h-1V252.2h-1V289.8h-1V264.1h-1V264.5h-1V295h-1V261.3h-1V263.6h-1V268.5h-1V264.8h-1V262h-1V264.6h-1V259.2h-1V265.2h-1V261.1h-1V263.6h-1V267.4h-1V269.9h-1V295h-1V293h-1V261.8h-1V256.1h-1V293.1h-1V290.4h-1V270.6h-1V270.8h-1V254.9h-1V292.3h-1V294.1h-1V261h-1V261.7h-1V293.7h-1V295h-1V255.5h-1V258.3h-1V265.5h-1V275.4h-1V271.1h-1V257.2h-1V249.5h-1V254.8h-1V261h-1V265h-1V293.3h-1V289.6h-1V264.7h-1V288h-1V290h-1V252.6h-1V249.8h-1V252.9h-1V293.7h-1V259.1h-1V293.3h-1V294.5h-1V258.6h-1V262.4h-1V292.9h-1V293.8h-1V260.3h-1V295h-1V249.4h-1V254.5h-1V293.2h-1V294.1h-1V292.2h-1V287.7h-1V256.1h-1V242h-1V246.9h-1V241.7h-1V243.8h-1V291.3h-1V240.7h-1V240h-1V249.8h-1V293.5h-1V295h-1V241.4h-1V247.2h-1V251.7h-1V285.5h-1V282.4h-1V257.1h-1V256.3h-1V282.1h-1V292.5h-1V294.8h-1V260.2h-1V263.9h-1V261.7h-1V259.9h-1V262.9h-1V262.7h-1V269.9h-1V261.5h-1V264.9h-1V295h-1V295h-1V254.6h-1V259.6h-1V255.8h-1V247.9h-1V291.2h-1V295h-1V262.1h-1V284h-1V260.8h-1V260h-1V261.1h-1V252.8h-1V256.5h-1V255.3h-1V264h-1V264.8h-1V265.1h-1V272.8h-1V268.2h-1V288.4h-1V257.8h-1V251.2h-1V248.1h-1V294.8h-1V257.9h-1V285.6h-1V284h-1V285.8h-1V257.1h-1V256h-1V293.2h-1V257.5h-1V259.3h-1V266h-1V262.7h-1V255.4h-1V257.8h-1V295h-1V295h-1V294.2h-1V254h-1V253.2h-1V260.2h-1V291.6h-1V267.8h-1V263.2h-1V257.1h-1V256.7h-1V258.1h-1V261.2h-1V292.4h-1V262.2h-1V263.7h-1V288.7h-1V257.2h-1V246.5h-1V246.8h-1V291.9h-1V295h-1V247.8h-1V252.2h-1V248.5h-1V251.5h-1V247.2h-1V247h-1V247.1h-1V244.9h-1V258.9h-1V257.5h-1V291.9h-1V250.3h-1V248.6h-1V249.3h-1V246.2h-1V248.4h-1V250.9h-1V249.7h-1V241.8h-1V244.9h-1V291h-1V293h-1V273h-1V270.4h-1V263.5h-1V254.2h-1V252.1h-1V249.6h-1V259.3h-1V295h-1V260.5h-1V255.3h-1V259.6h-1V294.5h-1V255.2h-1V261.3h-1V287.4h-1V288.3h-1V259.5h-1V291.6h-1V294.1h-1V262.4h-1V265.3h-1V290.4h-1V265.2h-1V268h-1V271.9h-1V267.9h-1V277.8h-1V295h-1V294.9h-1V273.5h-1V295h-1V260.6h-1V292.3h-1V292.6h-1V263.5h-1V291.6h-1V294.3h-1V254.2h-1V250.5h-1V295h-1V259.1h-1V292.3h-1V295h-1V268.7h-1V265.2h-1V295h-1V295h-1V266.7h-1V264.5h-1V265.5h-1V257.3h-1V289.5h-1V288.3h-1V240.6h-1V246.9h-1V251.8h-1V288.9h-1V288.5h-1V264.6h-1V295h-1V259.1h-1V294.4h-1V255.7h-1V295h-1V295h-1V245.6h-1V295h-1V229h-1V229.6h-1V229h-1V229h-1V229h-1V229.6h-1V229h-1V229h-1V229.6h-1V229h-1V229.6h-1V229h-1V229h-1V229h-1V229h-1V229h-1V229h-1V229.6h-1V229h-1V229h-1V229h-1V229h-1V229h-1V229.6h-1V229.6h-1V229h-1V229.6h-1V229h-1V229.6h-1V229.6h-1V229.6h-1V229.6h-1V229h-1V229h-1V229.6h-1V229h-1V229.6h-1V229h-1V229.6h-1V229h-1V229h-1V229h-1V229h-1V229h-1V229.6h-1V229.6h-1V229h-1V229.6h-1V229h-1V229h-1V229h-1V229h-1V229h-1V229h-1V229h-1V229h-1V229h-1V229.6h-1V229.6h-1V229h-1V229h-1V229h-1V229h-1V229h-1V229h-1V229.6h-1V229.6h-1V229h-1V229h-1V229.6h-1V229h-1V229h-1V229h-1V229.6h-1V229h-1V229h-1V229.6h-1V229h-1V229h-1V229h-1V229h-1V229.6h-1V229h-1V229h-1V229h-1V229h-1V229h-1V229h-1V229.6h-1V229h-1V229.6h-1V229h-1V229.6h-1V229h-1V229.6h-1ZM188 365V365h1V365h1V365h1V365h1V365h1V365h1V365h1V365h1V365h1V364.4h1V365h1V365h1V365h1V364.4h1V364.4h1V365h1V365h1V365h1V364.4h1V365h1V365h1V365h1V365h1V365h1V365h1V365h1V364.4h1V365h1V365h1V365h1V364.4h1V364.4h1V365h1V364.4h1V364.4h1V365h1V365h1V365h1V364.4h1V365h1V365h1V364.4h1V365h1V365h1V364.4h1V365h1V365h1V365h1V365h1V364.4h1V365h1V364.4h1V365h1V365h1V365h1V364.4h1V364.4h1V364.4h1V364.4h1V365h1V364.4h1V364.4h1V365h1V365h1V364.4h1V365h1V364.4h1V365h1V364.4h1V365h1V365h1V365h1V364.4h1V364.4h1V365h1V365h1V365h1V365h1V364.4h1V365h1V364.4h1V365h1V364.4h1V364.4h1V365h1V365h1V365h1V364.4h1V365h1V365h1V364.4h1V365h1V364.4h1V365h1V364.4h1V297h1V298.5h1V335.3h1V336.4h1V339h1V352.3h1V348.7h1V350.9h1V345.7h1V346.5h1V336.9h1V332.6h1V297.1h1V338.1h1V340.8h1V299.4h1V297h1V331.3h1V329.3h1V332.8h1V324.5h1V298.2h1V329.4h1V336.7h1V332.3h1V336.6h1V336.2h1V329.3h1V334h1V303.5h1V302h1V332.2h1V340.3h1V335.7h1V325.8h1V317.9h1V323.4h1V326.6h1V321.3h1V318h1V317.4h1V322.5h1V334.2h1V331.3h1V341.5h1V342.1h1V336.1h1V341.6h1V336.3h1V326.6h1V302.6h1V304.5h1V329.2h1V301.1h1V300.6h1V338.6h1V338h1V344.6h1V338h1V331.5h1V309.1h1V302.1h1V301.7h1V334.9h1V312h1V308.9h1V337.3h1V297h1V302.5h1V337.2h1V338.1h1V333.3h1V332.9h1V300.6h1V335.5h1V302.2h1V302h1V346.6h1V353.8h1V351.5h1V300.8h1V298.2h1V298.1h1V346.3h1V347.9h1V341.2h1V307.3h1V305.3h1V339.4h1V304.3h1V337h1V298.3h1V334h1V305h1V306.2h1V335h1V335.8h1V334.1h1V338h1V331.9h1V325.6h1V300.1h1V297h1V319.8h1V298.7h1V297h1V322.8h1V297h1V330.4h1V300h1V304.8h1V345.5h1V339.7h1V340.9h1V341.9h1V337.1h1V303.5h1V334.5h1V329.6h1V299.1h1V339.6h1V338h1V335.4h1V334.8h1V341.4h1V303.9h1V332.4h1V298.8h1V330.6h1V335.5h1V300.1h1V334.4h1V325.4h1V314h1V319.3h1V327.5h1V302.9h1V301h1V298.9h1V331.5h1V326.6h1V334.3h1V342h1V344.9h1V339.4h1V333.3h1V297h1V297h1V332.1h1V335.2h1V343.6h1V297h1V298.3h1V338.4h1V332.6h1V338.1h1V335.8h1V335h1V336h1V331.4h1V333.9h1V349.4h1V347.7h1V344.2h1V300.6h1V345.5h1V300.8h1V297.2h1V338h1V333.2h1V339.4h1V342.6h1V302.2h1V338.6h1V339.3h1V338.3h1V346.4h1V354.3h1V355.6h1V352.1h1V348h1V344.1h1V345.3h1V297h1V349.7h1V341.6h1V343.4h1V299h1V331h1V301.2h1V333.4h1V337.8h1V338.3h1V297h1V301.6h1V338.9h1V301.7h1V332.3h1V326.3h1V326.8h1V335.2h1V333h1V297h1V332.8h1V334.9h1V335.7h1V300.9h1V330.6h1V297.8h1V336.3h1V340.9h1V347.3h1V302.9h1V297.1h1V300.3h1V301h1V332.5h1V297h1V330h1V328.7h1V331.9h1V328.8h1V327.5h1V337.4h1V305.3h1V304.5h1V346.2h1V349.9h1V355.6h1V297h1V338.3h1V326h1V297h1V327.6h1V331.8h1V341.8h1V301.1h1V335.8h1V335.4h1V331.5h1V335.1h1V331.9h1V328.6h1V335h1V303.3h1V301.8h1V344.5h1V300.5h1V338.2h1V336.9h1V326.9h1V331.7h1V334.1h1V339.2h1V346.6h1V297h1V336.7h1V299.2h1V337.2h1V340.9h1V302.5h1V302.7h1V344.8h1V344.8h1V347.3h1V348.7h1V346h1V355.6h1V355.6h1V297h1V350h1V297h1V355.6h1V353.5h1V348.4h1V349.9h1V350.1h1V344.7h1V343.1h1V343.6h1V339.8h1V340.6h1V338.2h1V333.6h1V300.7h1V297.1h1V337.1h1V336.5h1V299.4h1V343.6h1V305.2h1V297.6h1V329.1h1V311.4h1V312.7h1V329h1V330.3h1V320.7h1V327.8h1V335.8h1V338.1h1V297.5h1V302.6h1V345.2h1V297.1h1V297h1V329.2h1V297h1V337.7h1V337.1h1V330.8h1V328.8h1V331h1V333.2h1V333.4h1V330.5h1V330.3h1V325.2h1V329.9h1V333.8h1V339.1h1V335.9h1V297h1V297h1V322h1V314.3h1V316.8h1V319.1h1V324.9h1V330.2h1V332.1h1V330.3h1V299.9h1V303.9h1V336.3h1V337.9h1V306.4h1V333.9h1V331.5h1V327.7h1V301.3h1V306.6h1V334h1V341.6h1V338.6h1V342.3h1V347.2h1V344.6h1V346.5h1V340.6h1V331.9h1V330.3h1V339.5h1V297h1V299.3h1V298.6h1V340.8h1V342.3h1V299.8h1V299.7h1V297h1V297h1V344.8h1V303.8h1V305.9h1V301h1V299.6h1V297h1V342.1h1V339.2h1V334.8h1V336.9h1V333.2h1V304.7h1V333.5h1V326.3h1V329.6h1V325.4h1V335.5h1V345.5h1V348.3h1V344.2h1V334.7h1V339.5h1V335.3h1V343.8h1V341h1V297h1V297h1V330.2h1V330.7h1V332.2h1V324.9h1V330.2h1V330.5h1V310h1V324.3h1V327h1V297.8h1V297h1V321.8h1V300h1V297h1V298.3h1V329.6h1V334.8h1V334.8h1V302.7h1V300.4h1V331.7h1V328.9h1V317.3h1V318.9h1V298.2h1V326.5h1V297h1V297h1V333.4h1V336.1h1V332.8h1V300.9h1V297.3h1V338.1h1V337.2h1V310.1h1V302.1h1V305h1V300.8h1V333.3h1V328.2h1V323.7h1V328.3h1V328.6h1V318.4h1V319.9h1V322.2h1V300.3h1V334.7h1V331.9h1V330.7h1V336.9h1V343.4h1V337.4h1V335.7h1V340.3h1V334.1h1V325.9h1V320.2h1V300.3h1V297h1V331.3h1V333.8h1V330.9h1V331.3h1V326.5h1V327.2h1V337.8h1V339.5h1V300.8h1V342.6h1V337.6h1V340.4h1V335.1h1V304h1V298.4h1V332.8h1V337.7h1V338.4h1V300h1V329.6h1V329.7h1V305.7h1V324.9h1V302.5h1V333.3h1V332.5h1V325.6h1V304.6h1V304.1h1V303.8h1V299.5h1V300.7h1V297h1V319.4h1V321.3h1V317.6h1V298.5h1V297h1V302.3h1V301.8h1V331.2h1V323.1h1V327h1V324.9h1V304.7h1V297.5h1V300.6h1V324h1V297h1V330.3h1V322.6h1V298.9h1V299.2h1V298.2h1V314h1V323h1V298.8h1V301.1h1V302.9h1V335.8h1V328.6h1V304.2h1V305.1h1V335.6h1V299.9h1V332h1V325.7h1V320.5h1V297.8h1V315.3h1V317.7h1V318.7h1V315.6h1V298.3h1V322h1V331.4h1V333.3h1V300.1h1V297h1V297.3h1V320.7h1V314h1V312.9h1V316.8h1V319.1h1V323.6h1V298.9h1V328.3h1V329.2h1V329.2h1V325.3h1V300.3h1V301.9h1V307.7h1V334.5h1V332.8h1V339h1V333.4h1V336.7h1V344h1V297.3h1V343.1h1V343.6h1V340.1h1V306.2h1V305.1h1V297.3h1V300.7h1V332.3h1V306.1h1V304.1h1V327.3h1V332.3h1V302.9h1V331h1V335.2h1V336.1h1V339h1V340.2h1V301.3h1V336.5h1V305.4h1V335.5h1V336.9h1V300.4h1V299.8h1V298.8h1V304.1h1V329.2h1V336.8h1V299.8h1V297.2h1V297h1V298.2h1V320.1h1V319.6h1V300.7h1V327h1V302.7h1V305.7h1V332h1V332.1h1V330.5h1V334.9h1V299.6h1V328.9h1V323.7h1V324.5h1V319.5h1V298h1V297h1V298.4h1V297h1V321.4h1V297h1V297h1V297.3h1V298.5h1V331.1h1V297h1V299.6h1V298.1h1V299.2h1V303.2h1V319.6h1V321.2h1V326.5h1V328.1h1V299.4h1V322.4h1V306.7h1V306.9h1V333.7h1V337.5h1V337.2h1V328.7h1V333.5h1V342.6h1V336.7h1V339.1h1V333h1V336.3h1V332.6h1V299.3h1V328.3h1V325.9h1V325.4h1V298.5h1V325h1V322.6h1V297.5h1V297h1V302.6h1V300.5h1V341h1V304.6h1V298.6h1V339.3h1V338.3h1V342.2h1V347.4h1V338.8h1V306.5h1V336.8h1V337.8h1V336.2h1V298.5h1V325.3h1V301h1V301.3h1V297.4h1V300.1h1V298.1h1V297h1V322.3h1V327.8h1V319.8h1V321.8h1V298.4h1V297h1V333h1V329.4h1V301.1h1V297.5h1V322.3h1V297.1h1V323.1h1V326.1h1V302.9h1V333.7h1V333.7h1V321.2h1V322.7h1V318.7h1V300.4h1V324.7h1V326h1V327.4h1V297.5h1V298.9h1V297h1V320.3h1V320.4h1V320.5h1V322.3h1V329.6h1V319.4h1V328.3h1V297.8h1V299.2h1V298h1V337.3h1V339.5h1V313.2h1V314.8h1V336.9h1V329h1V297h1V334.4h1V334.4h1V333.8h1V297h1V297h1V304.6h1V328h1V332.4h1V329h1V323.1h1V297.6h1V327.3h1V331.1h1V328.4h1V332h1V300.8h1V331.9h1V301.9h1V330.3h1V333.8h1V335.1h1V339.4h1V299.4h1V345.5h1V338.4h1V303.7h1V305.4h1V333.7h1V328.6h1V327.7h1V334.3h1V336.6h1V298.6h1V297h1V297h1V331.6h1V325.5h1V336.4h1V345.6h1V347.9h1V337.1h1V313.3h1V313.2h1V297h1V297h1V301.7h1V301.5h1V327.1h1V297.8h1V298.9h1V299.4h1V301.1h1V301.3h1V301.7h1V297.3h1V297h1V331.9h1V306.1h1V297h1V335.7h1V334.6h1V325.8h1V324h1V298.4h1V320.2h1V298.5h1V327.1h1V325.4h1V325.8h1V324.9h1V323h1V331.1h1V325.2h1V298.6h1V298.2h1V300.5h1V301.1h1V327h1V319.7h1V313.2h1V312.6h1V297h1V326.6h1V327.1h1V328.8h1V328.7h1V298.9h1V298.8h1V327.1h1V331.3h1V333h1V337h1V338.1h1V339.4h1V338.6h1V338.7h1V338.9h1V343.2h1V345.6h1V347.5h1V318.7h1V349.1h1V349.6h1V348.1h1V352.3h1V354.6h1V352.4h1V354.1h1V356.2h1V357.1h1V357.4h1V360h1V360.7h1V361.5h1V362.2h1V363.6h1V363.7h1V364.1h1V364.6h1V363.9h1V363.5h1V358.1h1V359.1h1V331.2h1V358h1V356.2h1V359.3h1V357.7h1V356.1h1V357.3h1V358.1h1V359.4h1V356.2h1V357.2h1V355.5h1V356.4h1V355.8h1V355.4h1V359.3h1V359h1V354.7h1V355.9h1V351.7h1V355.2h1V359.1h1V357.4h1V353.8h1V329.9h1V357.6h1V358.8h1V360.4h1V357.4h1V361.3h1V360.5h1V360.4h1V364.7h1V364.3h1V363.6h1V364.6h1V363.7h1V363.6h1V363.9h1V364.3h1V364.7h1V363.9h1V361.1h1V362.5h1V362.5h1V361.6h1V361.7h1V332.6h1V359.7h1V360.3h1V361.4h1V362.1h1V359.1h1V360.1h1V358.3h1V358h1V359h1V360.3h1V359.3h1V357.9h1V359h1V360.3h1V359h1V357.9h1V361.9h1V361.8h1V362.2h1V359.2h1V359.9h1V358.1h1V338.2h1V359.3h1V358.6h1V360.7h1V359.5h1V360.6h1V360.6h1V360h1V362.4h1V361.6h1V362.7h1V362.7h1V362.2h1V364.6h1V364.1h1V364.2h1V363.7h1V363.5h1V362.8h1V364h1V362.3h1V362.4h1V363.6h1V361.6h1V352.8h1V361.1h1V363.1h1V362.6h1V363.2h1V361h1V363.2h1V363.8h1V362.3h1V362.3h1V363.2h1V362.7h1V363.6h1V363.7h1V364.1h1V364.4h1V363.5h1V363.8h1V364.8h1V364.4h1V364.5h1V364.3h1V364.6h1V363.9h1V363.7h1V363.8h1V363.4h1V362.9h1V364.3h1V363.3h1V363.9h1V364.2h1V363.5h1V363.6h1V363.6h1V364.5h1V364.8h1V364.4h1V363.9h1V368.6h-1V367.2h-1V368.4h-1V368.5h-1V368.4h-1V367.3h-1V369h-1V369h-1V367.9h-1V368.1h-1V368.5h-1V367.9h-1V369.4h-1V368.9h-1V368.7h-1V369.1h-1V368.9h-1V367.4h-1V367.5h-1V368.4h-1V368.4h-1V367.4h-1V367.9h-1V367.8h-1V367.4h-1V369.2h-1V368.8h-1V368.9h-1V369.4h-1V370.4h-1V368.1h-1V370.2h-1V370.1h-1V370.8h-1V371.1h-1V370.7h-1V371.2h-1V369.1h-1V375h-1V370.3h-1V370.4h-1V370.2h-1V370h-1V368.7h-1V368.4h-1V368h-1V367.9h-1V367.3h-1V368.3h-1V367.3h-1V369.1h-1V368.7h-1V370.2h-1V370.8h-1V369.9h-1V369.8h-1V371.2h-1V370.6h-1V372h-1V371h-1V372.3h-1V372.2h-1V381.3h-1V373.8h-1V370.7h-1V372.8h-1V371.7h-1V372.9h-1V372.5h-1V373.1h-1V372.8h-1V372.7h-1V372.2h-1V371.5h-1V373.8h-1V373.5h-1V369.9h-1V372.4h-1V373.6h-1V370.4h-1V370.4h-1V372.7h-1V369.3h-1V369.8h-1V371.5h-1V391.7h-1V371.9h-1V369h-1V370.4h-1V370.7h-1V368.6h-1V368.6h-1V367.7h-1V367.9h-1V368h-1V368h-1V368.4h-1V368.1h-1V368.3h-1V367.3h-1V367.8h-1V373.9h-1V370.3h-1V372.6h-1V375.1h-1V374.6h-1V377.1h-1V372.7h-1V398h-1V376.7h-1V377.5h-1V374.3h-1V376.2h-1V377.3h-1V375.1h-1V376.8h-1V377h-1V378.7h-1V376.5h-1V373.7h-1V372.6h-1V379.6h-1V373.5h-1V378.5h-1V373.4h-1V372.7h-1V375.6h-1V373h-1V375.4h-1V374.3h-1V374.8h-1V374.6h-1V395.9h-1V371.2h-1V373.6h-1V367.4h-1V367.7h-1V368.1h-1V368h-1V367.9h-1V368.6h-1V369.7h-1V370.1h-1V371.3h-1V373.2h-1V374.6h-1V375.8h-1V376.4h-1V376h-1V379.4h-1V380h-1V382.4h-1V381.7h-1V382.3h-1V381.4h-1V413.3h-1V389.3h-1V389.5h-1V389h-1V392.7h-1V393.8h-1V389.6h-1V396.4h-1V393.4h-1V401h-1V396h-1V398.9h-1V397.5h-1V402.6h-1V430.9h-1V431.6h-1V402.1h-1V397.3h-1V401.3h-1V399h-1V404.5h-1V404.4h-1V434.9h-1V412.8h-1V408.3h-1V409.1h-1V405.6h-1V435.5h-1V435.5h-1V435.5h-1V406.1h-1V403.5h-1V435.5h-1V434.7h-1V408.8h-1V406.1h-1V404.4h-1V402.6h-1V435.5h-1V395.6h-1V398h-1V428.6h-1V402.5h-1V428.8h-1V404.7h-1V407.4h-1V435.5h-1V396.2h-1V431.8h-1V402.2h-1V401.6h-1V400.8h-1V405h-1V400.6h-1V408.9h-1V435.2h-1V402.4h-1V397.3h-1V403.2h-1V397.1h-1V431.9h-1V381.1h-1V380.6h-1V429.7h-1V431.2h-1V421.7h-1V382.8h-1V383.5h-1V385.3h-1V381.9h-1V433.2h-1V431.2h-1V396h-1V399.1h-1V431.8h-1V430.9h-1V389.4h-1V386.4h-1V396h-1V398.7h-1V403.3h-1V408.2h-1V433.6h-1V435.5h-1V401.1h-1V422.8h-1V433.9h-1V407.8h-1V406.1h-1V402.6h-1V434.7h-1V412.7h-1V410.1h-1V416.2h-1V417.4h-1V419.8h-1V417.3h-1V407h-1V433.8h-1V433.3h-1V435.5h-1V405.5h-1V435.4h-1V403h-1V410.1h-1V433.4h-1V435.5h-1V435.5h-1V434.1h-1V435.5h-1V417.3h-1V432.8h-1V403.8h-1V392.1h-1V389.1h-1V392.1h-1V434.3h-1V414.6h-1V426.3h-1V420.8h-1V416h-1V435.5h-1V399.8h-1V434.5h-1V431.1h-1V396.2h-1V389.6h-1V397.3h-1V433.8h-1V404.1h-1V431.9h-1V407.7h-1V407.2h-1V434.6h-1V432.8h-1V409.3h-1V435.5h-1V400.3h-1V397.1h-1V393.6h-1V425.3h-1V427.8h-1V408.1h-1V409.6h-1V401.5h-1V435.5h-1V434h-1V405.1h-1V400.6h-1V397.7h-1V396.6h-1V400.1h-1V432.9h-1V398.6h-1V381.4h-1V376.4h-1V379.4h-1V431.2h-1V427.5h-1V431.6h-1V390.6h-1V387.9h-1V380.1h-1V430.6h-1V419.3h-1V416.4h-1V391.3h-1V433.3h-1V432.7h-1V432.9h-1V402.4h-1V435.5h-1V431.9h-1V431.7h-1V435.5h-1V428.7h-1V394.6h-1V388.9h-1V431.8h-1V428.9h-1V427.8h-1V426.9h-1V398.3h-1V398.6h-1V400.7h-1V399h-1V435.3h-1V393.1h-1V395.5h-1V400.6h-1V409h-1V435h-1V401.8h-1V399.7h-1V398h-1V397.8h-1V398.4h-1V407.3h-1V427.5h-1V431.5h-1V413.9h-1V434.1h-1V433.2h-1V433.8h-1V432.5h-1V433h-1V433.2h-1V433.7h-1V429.5h-1V405.5h-1V400h-1V408.5h-1V410.6h-1V409.7h-1V430.3h-1V428.4h-1V433.3h-1V405h-1V431.7h-1V429.7h-1V418.5h-1V435.5h-1V434.9h-1V407.5h-1V409h-1V406.7h-1V402.8h-1V404.2h-1V402h-1V408h-1V413.8h-1V408.3h-1V403.1h-1V399.7h-1V397.9h-1V429.6h-1V430h-1V431.1h-1V398.4h-1V392.9h-1V388.9h-1V429.3h-1V431.5h-1V397.8h-1V427.2h-1V434.3h-1V408.3h-1V396.7h-1V431.1h-1V428.1h-1V384h-1V387.1h-1V435.5h-1V425.6h-1V425.9h-1V427.9h-1V430.5h-1V387.2h-1V389.9h-1V430h-1V431.7h-1V430.8h-1V388.4h-1V411.9h-1V409.8h-1V413.7h-1V403.9h-1V399.8h-1V390.7h-1V391.2h-1V386.7h-1V431.2h-1V430.8h-1V435.5h-1V397.1h-1V431.1h-1V433.1h-1V407.8h-1V412.9h-1V408h-1V435.5h-1V395.4h-1V395.3h-1V392.3h-1V419.9h-1V422.3h-1V392.5h-1V389.7h-1V435.5h-1V407h-1V432.6h-1V411.8h-1V432.2h-1V413.6h-1V414.2h-1V429.8h-1V435.5h-1V433.1h-1V410.7h-1V416.5h-1V417.7h-1V413.4h-1V432.7h-1V400.3h-1V397.2h-1V427.2h-1V403.1h-1V435.5h-1V428.9h-1V427.8h-1V405.8h-1V396.7h-1V394h-1V432.4h-1V387.6h-1V389.1h-1V398.1h-1V425.6h-1V435.5h-1V435.5h-1V407.5h-1V429.9h-1V429.9h-1V398.1h-1V390.9h-1V385.5h-1V377.9h-1V383.1h-1V392.5h-1V428.9h-1V429.8h-1V395.1h-1V388.1h-1V378.6h-1V378.9h-1V399.5h-1V389.9h-1V394h-1V386.9h-1V387.1h-1V388.5h-1V387.5h-1V397.3h-1V434.8h-1V408.1h-1V405.3h-1V402.3h-1V427.1h-1V396.7h-1V430.7h-1V434.6h-1V435.5h-1V397.5h-1V435.1h-1V400.6h-1V399.5h-1V402.5h-1V414.9h-1V413.8h-1V420.8h-1V435.5h-1V424.1h-1V426.6h-1V432.6h-1V394.9h-1V390.7h-1V433.5h-1V394.4h-1V391.3h-1V396.7h-1V394.7h-1V393.3h-1V395.8h-1V391.7h-1V396.2h-1V432.4h-1V429.9h-1V407.6h-1V398.7h-1V403.4h-1V435.3h-1V398.7h-1V432.8h-1V423.8h-1V398.3h-1V402.1h-1V408.9h-1V403h-1V404.4h-1V401h-1V394.6h-1V400.3h-1V434.4h-1V435.5h-1V425.8h-1V432.2h-1V400.9h-1V434.2h-1V435.5h-1V410.3h-1V406.5h-1V426.8h-1V428.1h-1V400.3h-1V401.6h-1V396.6h-1V399h-1V431.9h-1V407.4h-1V402.8h-1V399.5h-1V390.7h-1V389.2h-1V396.9h-1V402.6h-1V407.7h-1V433.1h-1V435.5h-1V400.6h-1V398.3h-1V403.2h-1V404.3h-1V407.2h-1V397.1h-1V386.9h-1V392.3h-1V434.1h-1V432.7h-1V391h-1V399.5h-1V435.5h-1V405h-1V405.9h-1V391.7h-1V433h-1V429.1h-1V393.5h-1V384.6h-1V435.5h-1V376.4h-1V376.4h-1V385.6h-1V428.8h-1V423.6h-1V386.6h-1V393.6h-1V400.2h-1V434h-1V433.4h-1V381.5h-1V386.6h-1V421.3h-1V392.9h-1V384.8h-1V384.1h-1V391.7h-1V401.6h-1V397.5h-1V402.6h-1V433.8h-1V433.1h-1V433.4h-1V406.9h-1V401.9h-1V399.9h-1V405.2h-1V426.8h-1V396.1h-1V431.5h-1V431.7h-1V433h-1V435.2h-1V409.3h-1V434.9h-1V433.8h-1V430h-1V425.6h-1V423.9h-1V396.2h-1V403.5h-1V400.8h-1V404.5h-1V407.7h-1V427.9h-1V413h-1V435.3h-1V396.9h-1V421.4h-1V435.2h-1V401.6h-1V401.2h-1V435.5h-1V394.9h-1V432.2h-1V435.5h-1V393.7h-1V398.2h-1V399.9h-1V390.9h-1V390.2h-1V387.4h-1V393.3h-1V392.5h-1V396.6h-1V397.2h-1V391.9h-1V435.5h-1V401h-1V402.4h-1V404.9h-1V402.6h-1V403.2h-1V432.4h-1V392.9h-1V404.3h-1V432.2h-1V403.6h-1V434.4h-1V396.2h-1V435.5h-1V435.5h-1V379.6h-1V383h-1V381.4h-1V386.9h-1V429.8h-1V435.5h-1V434.2h-1V434.7h-1V389.2h-1V385.1h-1V380.4h-1V376.4h-1V376.4h-1V424.3h-1V391.7h-1V395.1h-1V388.5h-1V435.5h-1V386.1h-1V380.2h-1V379.4h-1V425h-1V427.6h-1V419.6h-1V392.1h-1V429.6h-1V429.8h-1V394.8h-1V392h-1V435.5h-1V400.3h-1V401.9h-1V396.5h-1V399.4h-1V404.4h-1V406h-1V402.7h-1V431h-1V435.4h-1V396.3h-1V432.4h-1V396.3h-1V398.1h-1V408.4h-1V431.6h-1V431.1h-1V397.9h-1V395.5h-1V395.4h-1V400.6h-1V399.2h-1V403.2h-1V409.7h-1V412.4h-1V417.3h-1V419.5h-1V411.2h-1V430h-1V428.5h-1V395.9h-1V397.9h-1V403.7h-1V397.1h-1V400.9h-1V420.7h-1V412.8h-1V408.2h-1V405.5h-1V404.4h-1V435.5h-1V435.5h-1V407.5h-1V411h-1V434.1h-1V409.2h-1V407.7h-1V408.1h-1V409.8h-1V405.3h-1V407.7h-1V406.3h-1V433.4h-1V435.5h-1V409.5h-1V414.6h-1V407.6h-1V400h-1V395.7h-1V385.1h-1V391.7h-1V435.5h-1V431.4h-1V386.3h-1V434.8h-1V376.4h-1V376.4h-1V393.3h-1V424h-1V426.5h-1V435.5h-1V432h-1V435.5h-1V432.5h-1V433.4h-1V387.3h-1V380.8h-1V430.6h-1V386.1h-1V430.4h-1V424.4h-1V424.3h-1V382.4h-1V380.1h-1V386.5h-1V383.6h-1V381.4h-1V376.4h-1V378.1h-1V379.2h-1V419.2h-1V425.8h-1V377.9h-1V435.5h-1V431.9h-1V384.7h-1V429h-1V430.4h-1V405.5h-1V393.9h-1V390.5h-1V394.1h-1V429.5h-1V433.1h-1V396.4h-1V431.4h-1V435.5h-1V395.3h-1V393.2h-1V435.5h-1V427.7h-1V386.6h-1V391.9h-1V394.7h-1V402.4h-1V411.1h-1V435.5h-1V432h-1V431.1h-1V400.2h-1V431.1h-1V428.2h-1V393.5h-1V405.4h-1V401.4h-1V435.5h-1V403.4h-1V406.9h-1V406.7h-1V400.8h-1V429.3h-1V381h-1V382.2h-1V387.8h-1V394.2h-1V399.8h-1V435.5h-1V435.5h-1V395.8h-1V419.1h-1V398.9h-1V406.4h-1V403.2h-1V401.4h-1V396.4h-1V435.5h-1V435.5h-1V383.3h-1V428.1h-1V418.5h-1V385.3h-1V431h-1V387.2h-1V381.8h-1V385.6h-1V427.2h-1V425.3h-1V388.7h-1V394.1h-1V391h-1V391.7h-1V435.1h-1V392.9h-1V392.7h-1V394h-1V431.9h-1V433.2h-1V395.2h-1V394.2h-1V394h-1V384h-1V384.7h-1V433.8h-1V433.2h-1V384.9h-1V428.3h-1V429.1h-1V435.5h-1V418.5h-1V433.8h-1V430.1h-1V385h-1V388.6h-1V391.3h-1V390.7h-1V430.4h-1V426.8h-1V393.6h-1V393.4h-1V397.8h-1V391.7h-1V388.6h-1V388.1h-1V398.5h-1V405.4h-1V408.5h-1V434.4h-1V430.5h-1V383.2h-1V435.5h-1V400.9h-1V398.5h-1V430.7h-1V399.5h-1V406.4h-1V401.8h-1V394.6h-1V395.9h-1V435.5h-1V432.3h-1V433.5h-1V429.9h-1V404.9h-1V414.7h-1V417.5h-1V410.8h-1V403.2h-1V400.5h-1V400.5h-1V400h-1V428.7h-1V434.8h-1V435h-1V410.8h-1V409.9h-1V395.5h-1V430.8h-1V433.8h-1V396.7h-1V405.5h-1V407h-1V401.2h-1V397.5h-1V428.8h-1V426.9h-1V393.6h-1V395.7h-1V388.5h-1V435.5h-1V395.1h-1V428.9h-1V435.3h-1V433.7h-1V397.5h-1V435.5h-1V430.2h-1V434.5h-1V397.6h-1V392.1h-1V389.6h-1V394.5h-1V394h-1V403.7h-1V403.9h-1V434.8h-1V429.6h-1V394.8h-1V388.8h-1V435.5h-1V367h-1V367.6h-1V367h-1V367h-1V367h-1V367h-1V367h-1V367h-1V367h-1V367h-1V367.6h-1V367h-1V367.6h-1V367h-1V367h-1V367.6h-1V367.6h-1V367.6h-1V367h-1V367h-1V367h-1V367h-1V367.6h-1V367h-1V367h-1V367h-1V367h-1V367.6h-1V367.6h-1V367.6h-1V367h-1V367h-1V367h-1V367h-1V367h-1V367.6h-1V367h-1V367.6h-1V367h-1V367h-1V367.6h-1V367h-1V367h-1V367.6h-1V367h-1V367h-1V367h-1V367.6h-1V367h-1V367h-1V367h-1V367h-1V367h-1V367h-1V367h-1V367h-1V367.6h-1V367h-1V367h-1V367h-1V367h-1V367h-1V367h-1V367h-1V367h-1V367h-1V367h-1V367h-1V367.6h-1V367.6h-1V367h-1V367.6h-1V367.6h-1V367h-1V367h-1V367h-1V367h-1V367h-1V367.6h-1V367.6h-1V367h-1V367h-1V367h-1V367h-1V367h-1V367h-1V367h-1V367h-1V367h-1V367.6h-1V367.6h-1V367h-1V367h-1V367.6h-1V367h-1Z" fill="#6262d0"/></svg>
<div class="a" style="left:188px;top:227.6px;width:95px;height:1.3px;background:repeating-linear-gradient(90deg,#0c0c20 0 9px,#4a4a80 9px 10.5px)"></div>
<div class="a" style="left:188px;top:365.6px;width:95px;height:1.3px;background:repeating-linear-gradient(90deg,#0c0c20 0 11px,#4a4a80 11px 12.5px);opacity:0.85"></div>
<div class="a" style="left:181px;top:295px;width:1077px;height:1px;background:#111"></div>
<div class="a" style="left:1195px;top:227.8px;width:52px;height:1px;background:linear-gradient(90deg,rgba(34,34,58,0),rgba(34,34,58,0.75) 25px)"></div><div class="a" style="left:1195px;top:365.8px;width:52px;height:1px;background:linear-gradient(90deg,rgba(34,34,58,0),rgba(34,34,58,0.6) 25px)"></div>

<!-- vertical ruler -->
<div class="t" style="left:141px;width:40px;text-align:right;top:163.1px;font-size:11.5px;font-weight:700;color:#1a1a1a">1,0</div>
<div class="t" style="left:141px;width:40px;text-align:right;top:190.1px;font-size:11.5px;font-weight:400;color:#1a1a1a">0,5</div>
<div class="t" style="left:141px;width:40px;text-align:right;top:224.1px;font-size:11.5px;font-weight:700;color:#1a1a1a">0,0</div>
<div class="t" style="left:141px;width:40px;text-align:right;top:257.1px;font-size:11.5px;font-weight:400;color:#1a1a1a">-0,5</div>
<div class="t" style="left:141px;width:40px;text-align:right;top:283.1px;font-size:11.5px;font-weight:700;color:#1a1a1a">-1,0</div>
<div class="t" style="left:141px;width:40px;text-align:right;top:300.6px;font-size:11.5px;font-weight:700;color:#1a1a1a">1,0</div>
<div class="t" style="left:141px;width:40px;text-align:right;top:328.1px;font-size:11.5px;font-weight:400;color:#1a1a1a">0,5</div>
<div class="t" style="left:141px;width:40px;text-align:right;top:362.1px;font-size:11.5px;font-weight:700;color:#1a1a1a">0,0</div>
<div class="t" style="left:141px;width:40px;text-align:right;top:397.1px;font-size:11.5px;font-weight:400;color:#1a1a1a">-0,5</div>
<div class="t" style="left:141px;width:40px;text-align:right;top:423.1px;font-size:11.5px;font-weight:700;color:#1a1a1a">-1,0</div>
<div class="a" style="left:182px;top:194px;width:4px;height:1px;background:#222"></div>
<div class="a" style="left:182px;top:262px;width:4px;height:1px;background:#222"></div>
<div class="a" style="left:182px;top:332px;width:4px;height:1px;background:#222"></div>
<div class="a" style="left:182px;top:400px;width:4px;height:1px;background:#222"></div>
<div class="a" style="left:180px;top:227px;width:6px;height:2px;background:#222"></div>
<div class="a" style="left:180px;top:365px;width:6px;height:2px;background:#222"></div>
<div class="a" style="left:180px;top:435px;width:6px;height:2px;background:#222"></div>

<!-- track controls -->
<svg style="left:12px;top:150px" width="10" height="10"><path d="M1 1L9 9M9 1L1 9" stroke="#222" stroke-width="1.1"/></svg>
<div class="t" style="left:29px;top:147.5px;font-size:13px;color:#1a1a1a">musique</div>
<svg style="left:120px;top:150px" width="11" height="8"><path d="M1 6.5L5.5 2L10 6.5" fill="none" stroke="#222" stroke-width="1.1"/></svg>
<div class="a" style="left:138px;top:153px;width:2px;height:2px;background:#333;box-shadow:4.5px 0 0 #333,9px 0 0 #333"></div>
<div class="btn" style="left:9px;top:164px;width:69px;height:18px;background:#c7d2e7;border-radius:4px"></div>
<div class="t" style="left:29px;top:168px;font-size:13px;color:#1a1a1a">Mute</div>
<div class="btn" style="left:82px;top:164px;width:69px;height:18px;background:#c7d2e7;border-radius:4px"></div>
<div class="t" style="left:103px;top:168px;font-size:13px;color:#1a1a1a">Solo</div>
<div class="btn" style="left:9px;top:186px;width:142px;height:22px;background:#c7d2e7;border-radius:4px"></div>
<div class="t" style="left:63px;top:191px;font-size:13px;color:#1a1a1a">Effets</div>
<div class="a" style="left:15px;top:214px;width:5px;height:1px;background:#222"></div>
<div class="t" style="left:137px;top:210px;font-size:10px;font-weight:700;color:#222">+</div>
<div class="a" style="left:15px;top:219px;width:131px;height:4px;background:repeating-linear-gradient(90deg,#f2f5fb 0 1px,transparent 1px 6.5px)"></div><div class="a" style="left:15px;top:223px;width:131px;height:2px;background:#c4cfe3"></div>
<div class="t" style="left:15px;top:239px;font-size:9px;font-weight:700;color:#222">G</div>
<div class="t" style="left:136px;top:239px;font-size:9px;font-weight:700;color:#222">D</div>
<div class="a" style="left:15px;top:249px;width:131px;height:4px;background:repeating-linear-gradient(90deg,#f2f5fb 0 1px,transparent 1px 6.5px)"></div><div class="a" style="left:15px;top:253px;width:131px;height:2px;background:#c4cfe3"></div>
<svg style="left:73px;top:217px" width="14" height="14"><circle cx="6.7" cy="6.7" r="5.6" fill="#fff" stroke="#111" stroke-width="1.2"/></svg>
<svg style="left:73px;top:247px" width="14" height="14"><circle cx="6.7" cy="6.7" r="5.6" fill="#fff" stroke="#111" stroke-width="1.2"/></svg>


<!-- scrollbars -->
<div class="a" style="left:1263px;top:137px;width:17px;height:430px;background:#f2f2f2"></div>
<div class="a" style="left:1271px;top:153px;width:2px;height:396px;background:#8a8a8a;border-radius:1px"></div>
<div class="a" style="left:0;top:567px;width:1280px;height:17px;background:#efeff0;border-top:1px solid #fff"></div>
<div class="a" style="left:208px;top:575px;width:837px;height:2px;background:#858585;border-radius:1px"></div>

<!-- bottom toolbar -->
<div class="a" style="left:0;top:584px;width:1280px;height:65px;background:#f7f7f7"></div>
<div class="grip" style="left:3px;top:609px"></div>
<div class="t" style="left:17px;top:596.5px;font-size:12.6px">Tempo</div>
<div class="t" style="left:83px;top:596.5px;font-size:12.4px">Indication de mesure</div>
<div class="a" style="left:18px;top:616px;width:41px;height:22px;background:#fff;border:1px solid #e6e6e6;border-bottom:1px solid #8a8a8a;border-radius:3px"></div>
<div class="t" style="left:24px;top:620px">120</div>
<div class="a" style="left:61px;top:616px;width:15px;height:21px;background:#fff;border:1px solid #d6d6d6;border-radius:2px"></div>
<div class="a" style="left:62px;top:626px;width:13px;height:1px;background:#d6d6d6"></div>
<svg style="left:61px;top:616px" width="15" height="21"><path d="M4.5 7.5L7.5 4.5L10.5 7.5Z M4.5 13.5L7.5 16.5L10.5 13.5Z" fill="#111"/></svg>
<div class="a" style="left:84px;top:616px;width:31px;height:22px;background:#fff;border:1px solid #e6e6e6;border-bottom:1px solid #8a8a8a;border-radius:3px"></div>
<div class="t" style="left:89px;top:620px">4</div>
<div class="a" style="left:117px;top:616px;width:15px;height:21px;background:#fff;border:1px solid #d6d6d6;border-radius:2px"></div>
<div class="a" style="left:118px;top:626px;width:13px;height:1px;background:#d6d6d6"></div>
<svg style="left:117px;top:616px" width="15" height="21"><path d="M4.5 7.5L7.5 4.5L10.5 7.5Z M4.5 13.5L7.5 16.5L10.5 13.5Z" fill="#111"/></svg>
<div class="t" style="left:137px;top:619px;font-size:13px">/</div>
<div class="a" style="left:148px;top:615px;width:50px;height:23px;background:#fff;border:1px solid #d9d9d9;border-radius:2px"></div>
<div class="t" style="left:152px;top:620px">4</div>
<svg style="left:183px;top:622px" width="10" height="8"><path d="M1 2L5 6L9 2" fill="none" stroke="#555" stroke-width="1"/></svg>

<div class="grip" style="left:211px;top:609px"></div>
<div class="a" style="left:225px;top:595px;width:13px;height:13px;background:#fafafa;border:1px solid #666;border-radius:3px"></div>
<div class="t" style="left:240px;top:596px">Ancrer</div>
<div class="a" style="left:225px;top:615px;width:150px;height:23px;background:#fff;border:1px solid #8f8f8f;border-radius:2px"></div>
<div class="a" style="left:230px;top:619px;width:125px;height:15px;background:#ededed"></div>
<div class="t" style="left:230px;top:621px;color:#8a8a8a">1/8</div>
<svg style="left:360px;top:622px" width="10" height="8"><path d="M1 2L5 6L9 2" fill="none" stroke="#aaa" stroke-width="1"/></svg>

<div class="grip" style="left:383px;top:609px"></div>
<div class="a" style="left:394px;top:596px;width:230px;height:40px;background:#2f3243;border:1px solid #9a9aa2;box-shadow:inset 0 0 0 1px #f4f4f4"></div>
<div class="t" style="left:391.7px;width:30px;text-align:center;top:602.1px;font-size:29px;color:#fff">0</div>
<div class="t" style="left:411.3px;width:30px;text-align:center;top:602.1px;font-size:29px;color:#fff">0</div>
<div class="t" style="left:437.0px;width:30px;text-align:center;top:602.1px;font-size:29px;color:#fff">h</div>
<div class="t" style="left:463.0px;width:30px;text-align:center;top:602.1px;font-size:29px;color:#fff">0</div>
<div class="t" style="left:482.3px;width:30px;text-align:center;top:602.1px;font-size:29px;color:#fff">0</div>
<div class="t" style="left:512.6px;width:30px;text-align:center;top:602.1px;font-size:29px;color:#fff">m</div>
<div class="t" style="left:540.3px;width:30px;text-align:center;top:602.1px;font-size:29px;color:#fff">0</div>
<div class="t" style="left:560.4px;width:30px;text-align:center;top:602.1px;font-size:29px;color:#fff">0</div>
<div class="t" style="left:586.0px;width:30px;text-align:center;top:602.1px;font-size:29px;color:#fff">s</div>
<svg style="left:613.5px;top:614.5px" width="10" height="6"><path d="M0 0H9L4.5 5Z" fill="#fff"/></svg>
<div class="a" style="left:628px;top:584px;width:1px;height:64px;background:#dcdcdc"></div>
<div class="a" style="left:630px;top:584px;width:1px;height:64px;background:#ededed"></div>

<div class="grip" style="left:634px;top:609px"></div>
<div class="t" style="left:648px;top:592px">Sélection</div>
<div class="btn" style="left:676px;top:614px;width:23px;height:23px;background:#e0e0e3"></div>
<svg style="left:679px;top:618px" width="15" height="15" viewBox="0 0 17 17"><path d="M7.2 1.5H9.8L10.3 3.6L12 4.6L14.1 4L15.4 6.2L13.8 7.7V9.3L15.4 10.8L14.1 13L12 12.4L10.3 13.4L9.8 15.5H7.2L6.7 13.4L5 12.4L2.9 13L1.6 10.8L3.2 9.3V7.7L1.6 6.2L2.9 4L5 4.6L6.7 3.6Z" fill="none" stroke="#222" stroke-width="1.2" stroke-linejoin="round"/><circle cx="8.5" cy="8.5" r="2.2" fill="none" stroke="#222" stroke-width="1.2"/></svg>
<div class="a" style="left:705px;top:590px;width:164px;height:22px;background:#2f3243;border:1px solid #a0a0a8;box-shadow:inset 0 0 0 1px #f4f4f4"></div>
<div class="t" style="left:698.4px;width:30px;text-align:center;top:595.6px;font-size:13.5px;color:#fff">0</div>
<div class="t" style="left:709.3px;width:30px;text-align:center;top:595.6px;font-size:13.5px;color:#fff">0</div>
<div class="t" style="left:721.2px;width:30px;text-align:center;top:595.6px;font-size:13.5px;color:#fff">h</div>
<div class="t" style="left:733.4px;width:30px;text-align:center;top:595.6px;font-size:13.5px;color:#fff">0</div>
<div class="t" style="left:744.1px;width:30px;text-align:center;top:595.6px;font-size:13.5px;color:#fff">0</div>
<div class="t" style="left:758.6px;width:30px;text-align:center;top:595.6px;font-size:13.5px;color:#fff">m</div>
<div class="t" style="left:772.0px;width:30px;text-align:center;top:595.6px;font-size:13.5px;color:#fff">0</div>
<div class="t" style="left:782.8px;width:30px;text-align:center;top:595.6px;font-size:13.5px;color:#fff">0</div>
<div class="t" style="left:790.3px;width:30px;text-align:center;top:595.6px;font-size:13.5px;color:#fff">.</div>
<div class="t" style="left:797.3px;width:30px;text-align:center;top:595.6px;font-size:13.5px;color:#fff">0</div>
<div class="t" style="left:808.4px;width:30px;text-align:center;top:595.6px;font-size:13.5px;color:#fff">0</div>
<div class="t" style="left:819.6px;width:30px;text-align:center;top:595.6px;font-size:13.5px;color:#fff">0</div>
<div class="t" style="left:831.4px;width:30px;text-align:center;top:595.6px;font-size:13.5px;color:#fff">s</div>
<svg style="left:856px;top:599px" width="10" height="6"><path d="M0 0.2H9.2L4.6 5.4Z" fill="#fff"/></svg>
<div class="a" style="left:705px;top:614px;width:164px;height:23px;background:#2f3243;border:1px solid #a0a0a8;box-shadow:inset 0 0 0 1px #f4f4f4"></div>
<div class="t" style="left:698.4px;width:30px;text-align:center;top:619.6px;font-size:13.5px;color:#fff">0</div>
<div class="t" style="left:709.3px;width:30px;text-align:center;top:619.6px;font-size:13.5px;color:#fff">0</div>
<div class="t" style="left:721.2px;width:30px;text-align:center;top:619.6px;font-size:13.5px;color:#fff">h</div>
<div class="t" style="left:733.4px;width:30px;text-align:center;top:619.6px;font-size:13.5px;color:#fff">0</div>
<div class="t" style="left:744.1px;width:30px;text-align:center;top:619.6px;font-size:13.5px;color:#fff">0</div>
<div class="t" style="left:758.6px;width:30px;text-align:center;top:619.6px;font-size:13.5px;color:#fff">m</div>
<div class="t" style="left:772.0px;width:30px;text-align:center;top:619.6px;font-size:13.5px;color:#fff">5</div>
<div class="t" style="left:782.8px;width:30px;text-align:center;top:619.6px;font-size:13.5px;color:#fff">8</div>
<div class="t" style="left:790.3px;width:30px;text-align:center;top:619.6px;font-size:13.5px;color:#fff">.</div>
<div class="t" style="left:797.3px;width:30px;text-align:center;top:619.6px;font-size:13.5px;color:#fff">4</div>
<div class="t" style="left:808.4px;width:30px;text-align:center;top:619.6px;font-size:13.5px;color:#fff">8</div>
<div class="t" style="left:819.6px;width:30px;text-align:center;top:619.6px;font-size:13.5px;color:#fff">0</div>
<div class="t" style="left:831.4px;width:30px;text-align:center;top:619.6px;font-size:13.5px;color:#fff">s</div>
<svg style="left:856px;top:623px" width="10" height="6"><path d="M0 0.2H9.2L4.6 5.4Z" fill="#fff"/></svg>

<div class="grip" style="left:877px;top:593px"></div>
<div class="btn" style="left:886px;top:587px;width:27px;height:27px;background:#dcdde2"></div>
<svg style="left:891px;top:593px" width="16" height="15"><path d="M1 0.5L14.5 7.5L1 14.5Z" fill="#3e8a60"/></svg>
<div class="a" style="left:918px;top:594px;width:5px;height:1.2px;background:#111"></div>
<div class="t" style="left:1047px;top:590px;font-size:11px;font-weight:700">+</div>
<div class="a" style="left:918px;top:600.5px;width:138px;height:4px;background:repeating-linear-gradient(90deg,#c9ced8 0 1px,transparent 1px 9.6px)"></div><div class="a" style="left:918px;top:604px;width:138px;height:2px;background:#c5ccd8"></div>
<svg style="left:957px;top:597px" width="14" height="14"><circle cx="6.8" cy="6.8" r="5.5" fill="#fff" stroke="#111" stroke-width="1.3"/></svg>
<div class="a" style="left:875px;top:616px;width:405px;height:1px;background:#e0e0e0"></div>
<div class="a" style="left:1062px;top:584px;width:1px;height:32px;background:#dedede"></div>
<div class="a" style="left:1065px;top:584px;width:1px;height:32px;background:#dedede"></div>


<!-- status bar -->
<div class="a" style="left:0;top:648px;width:1280px;height:24px;background:#f0f0f0;border-top:1px solid #dcdcdc"></div>
<div class="a" style="left:9px;top:649px;width:1px;height:23px;background:#d8d8d8"></div>
<div class="a" style="left:232px;top:649px;width:1px;height:23px;background:#d8d8d8"></div>
<div class="t" style="left:14px;top:656.5px;font-size:12.3px">Arrêté.</div>
<div class="t" style="left:1049px;top:648.5px;font-size:18px;font-style:italic;font-weight:700;color:#fff;text-shadow:1.5px 1.5px 1.5px #555,0 0 1px #999">www.astucesinternet.com</div>
</body></html>
